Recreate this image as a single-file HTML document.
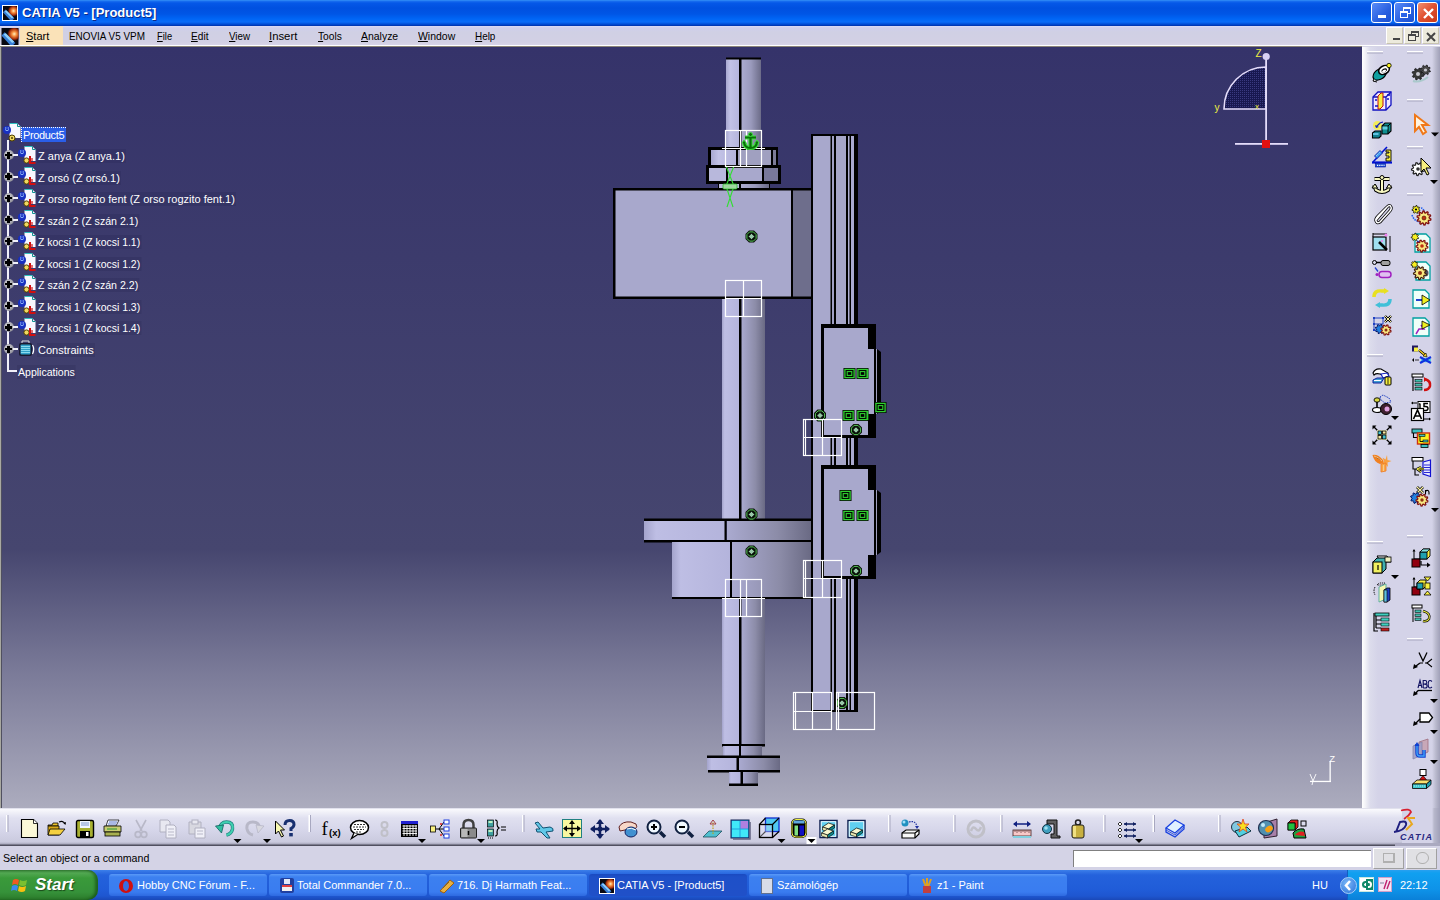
<!DOCTYPE html>
<html><head><meta charset="utf-8">
<style>
*{margin:0;padding:0;box-sizing:border-box}
html,body{width:1440px;height:900px;overflow:hidden;background:#d6d5e6;font-family:"Liberation Sans",sans-serif;position:relative}
.abs{position:absolute}
#title{left:0;top:0;width:1440px;height:26px;background:linear-gradient(#3a98f8 0,#1a70f0 1px,#0558e8 3px,#0050e0 8px,#0056e6 14px,#0066f6 19px,#0a6cf8 22px,#0048d0 24.5px,#0030a8 26px)}
#title .t{left:22px;top:5px;color:#fff;font-weight:bold;font-size:13px;line-height:16px;text-shadow:1px 1px 0 #0a2a8a}
#menu{left:0;top:26px;width:1440px;height:20px;background:linear-gradient(#dcdcf6 0,#cfcfec 2px,#d0d0e4 6px,#d2d0e4 16px,#d8d4e8 19px);border-bottom:1px solid #fff}
#menu span{position:absolute;top:3px;font-size:11px;line-height:14px;color:#000;transform-origin:0 0;white-space:nowrap}
#vp{left:2px;top:47px;width:1360px;height:761px;background:linear-gradient(#35336a 0%,#46466f 66%,#7a7a98 82%,#acacbe 100%)}
#vpl{left:0;top:46px;width:2px;height:762px;background:linear-gradient(90deg,#a8a8a0 0,#a8a8a0 1px,#505060 1px)}
#rtb{left:1362px;top:47px;width:78px;height:798px;background:linear-gradient(90deg,#fff 0,#f4f4f8 3px,#dcdcec 8px,#d4d3e8 16px,#d4d3e8 70px,#b8b8cc 74px,#a0a0b8 78px)}
#btb{left:0;top:808px;width:1440px;height:38px;background:linear-gradient(#c8c8dc 0,#fafafe 1px,#f4f4fa 3px,#e0e0f0 10px,#d6d6ea 22px,#cacade 34px,#a8a8bc 36px,#505060 37px,#505060 38px)}
#status{left:0;top:846px;width:1440px;height:24px;background:#d4d3e6}
#status .t{left:3px;top:5px;font-size:11px;line-height:14px;color:#000;transform:scaleX(0.965);transform-origin:0 0;white-space:nowrap}
#task{left:0;top:870px;width:1440px;height:30px;background:linear-gradient(#3c80ea 0,#3272e4 2px,#2462dc 5px,#205cd8 20px,#1e56d0 26px,#1a48b8 30px)}

.xb{width:21px;height:21px;border:1px solid #fff;border-radius:3px;background:linear-gradient(135deg,#5a8cf8,#2a60e0 60%,#1a50d0)}
.xc{background:linear-gradient(135deg,#f09070,#e05030 50%,#c83818)}
.mb{top:1px;width:17px;height:17px;background:#eceadc;border:1px solid #fff;border-right-color:#c8c4b0;border-bottom-color:#c8c4b0}
.sbtn{top:2px;width:31px;height:21px;background:#e0e0e4;border:1px solid #fff;border-right-color:#a0a0a0;border-bottom-color:#a0a0a0}
#startbtn{left:0;top:0;width:98px;height:30px;background:linear-gradient(#3c8a3c 0,#52a852 3px,#3a9a3a 8px,#36923a 22px,#2a7a2a 30px);border-radius:0 10px 10px 0;box-shadow:inset -3px 0 3px rgba(0,40,0,0.45)}
.tb{top:4px;width:158px;height:22px;border-radius:3px;background:linear-gradient(#5a9af8 0,#3c80f0 3px,#3a7cf0 18px,#2e6ae0 22px);color:#fff;font-size:11px}
.tb span{position:absolute;left:28px;top:5px;white-space:nowrap}
.tb.act{background:linear-gradient(#1a4ac0 0,#1e50c8 3px,#2050c8 20px);}
#tray{left:1347px;top:0;width:93px;height:30px;background:linear-gradient(#28a0f0 0,#10a0f0 3px,#0e92e8 20px,#0a80d8 30px);border-left:1px solid #1060c0}

.tr{font-size:11px;color:#fff;white-space:nowrap;line-height:14px;padding:0 1px;background:rgba(20,20,60,0.12)}
.tr.sel{background:#2a5ee8;padding:0 2px 0 1px;left:21px;top:127px !important;border-top:1px dotted #fff;border-left:1px dotted #fff;letter-spacing:-0.35px}
.pl{left:3.5px;width:10px;height:10px;border-radius:50%;background:radial-gradient(circle at 40% 40%,#d8d8dc 0%,#a8a8b0 50%,#6a6a78 100%)}
.pl::before{content:"";position:absolute;left:1.5px;top:3.8px;width:7px;height:2.4px;background:#000}
.pl::after{content:"";position:absolute;left:3.8px;top:1.5px;width:2.4px;height:7px;background:#000}
</style></head><body>
<div id="vpl" class="abs"></div>
<div id="vp" class="abs"></div><div class="abs" style="left:0;top:46px;width:1362px;height:1px;background:#8a8478"></div>
<svg class="abs" style="left:0;top:0" width="1440" height="900" viewBox="0 0 1440 900">
<defs>
<linearGradient id="rodL" x1="0" x2="1" y1="0" y2="0"><stop offset="0" stop-color="#a8a8d0"/><stop offset="0.3" stop-color="#c2c2e6"/><stop offset="1" stop-color="#b4b4dc"/></linearGradient>
<linearGradient id="rodR" x1="0" x2="1" y1="0" y2="0"><stop offset="0" stop-color="#acacd0"/><stop offset="0.5" stop-color="#9a9abc"/><stop offset="1" stop-color="#6c6c88"/></linearGradient>
<linearGradient id="cylL" x1="0" x2="1"><stop offset="0" stop-color="#a4a4cc"/><stop offset="0.15" stop-color="#bebee4"/><stop offset="1" stop-color="#b4b4dc"/></linearGradient>
<linearGradient id="cylR" x1="0" x2="1"><stop offset="0" stop-color="#aaaad0"/><stop offset="0.6" stop-color="#8c8ca8"/><stop offset="1" stop-color="#6a6a84"/></linearGradient>
<linearGradient id="side" x1="0" x2="1"><stop offset="0" stop-color="#7a7a98"/><stop offset="1" stop-color="#6a6a88"/></linearGradient>
</defs>
<g id="model">
<!-- upper rod -->
<rect x="726" y="59" width="14" height="90" fill="url(#rodL)"/>
<rect x="741" y="59" width="20" height="90" fill="url(#rodR)"/>
<rect x="726" y="57.5" width="35" height="2" fill="#000"/>
<rect x="739" y="58" width="2.5" height="91" fill="#000"/>
<!-- upper nut -->
<rect x="708" y="147" width="70" height="20" fill="#000"/>
<rect x="711" y="150" width="25" height="15" fill="url(#rodL)"/>
<rect x="738" y="150" width="33" height="15" fill="#a0a0c0"/>
<rect x="773" y="150" width="3" height="15" fill="#7c7c98"/>
<!-- lower nut -->
<rect x="706" y="165" width="75" height="19" fill="#000"/>
<rect x="709" y="168" width="17" height="13" fill="#b8b8dc"/>
<rect x="728" y="168" width="34" height="13" fill="#a8a8cc"/>
<rect x="764" y="168" width="14" height="13" fill="#78789a"/>
<!-- washer -->
<rect x="718" y="183" width="52" height="6" fill="#000"/><rect x="719" y="184" width="20" height="4" fill="#b8b8dc"/><rect x="741" y="184" width="28" height="4" fill="url(#rodR)"/>
<!-- big block -->
<rect x="613" y="188" width="200" height="111" fill="#000"/>
<rect x="615.5" y="190.5" width="175.5" height="106" fill="#a8a8cc"/>
<rect x="793" y="190.5" width="18.5" height="106" fill="#6e6e8c"/>
<!-- rod between block and plate -->
<rect x="722" y="299" width="18" height="220" fill="url(#cylL)"/>
<rect x="741" y="299" width="24" height="220" fill="url(#cylR)"/>
<rect x="739" y="299" width="2.5" height="220" fill="#000"/>
<!-- plate -->
<rect x="644" y="521" width="81" height="19" fill="url(#cylL)"/>
<rect x="727" y="521" width="84" height="19" fill="url(#cylR)"/>
<rect x="644" y="518.5" width="168" height="2.5" fill="#000"/>
<rect x="644" y="540" width="168" height="2.5" fill="#000"/>
<rect x="724.5" y="520" width="2" height="21" fill="#000"/>
<!-- lower cylinder -->
<rect x="672" y="542" width="58" height="55" fill="url(#cylL)"/>
<rect x="732" y="542" width="79" height="55" fill="url(#cylR)"/>
<rect x="730" y="541" width="2" height="57" fill="#000"/>
<rect x="672" y="597" width="140" height="2" fill="#000"/>
<!-- rod lower -->
<rect x="722" y="598" width="18" height="147" fill="url(#cylL)"/>
<rect x="741" y="598" width="24" height="147" fill="url(#cylR)"/>
<rect x="739" y="598" width="2.5" height="158" fill="#000"/>
<rect x="722" y="744" width="43" height="2.5" fill="#000"/>
<!-- neck -->
<rect x="723" y="746" width="16" height="10" fill="url(#cylL)"/>
<rect x="741" y="746" width="21" height="10" fill="url(#cylR)"/>
<!-- flange -->
<rect x="707" y="755.5" width="73" height="2.5" fill="#000"/>
<rect x="707" y="758" width="30" height="12" fill="url(#cylL)"/>
<rect x="739" y="758" width="41" height="12" fill="url(#cylR)"/>
<rect x="736.5" y="757" width="2.5" height="14" fill="#000"/>
<rect x="708" y="770" width="72" height="2.5" fill="#000"/>
<!-- tip -->
<rect x="729" y="772" width="12" height="12" fill="url(#cylL)"/>
<rect x="742" y="772" width="16" height="12" fill="url(#cylR)"/>
<rect x="740.5" y="771" width="2.5" height="14" fill="#000"/>
<rect x="729" y="783.5" width="29" height="2.5" fill="#000"/>
<!-- rail -->
<rect x="811" y="134" width="47" height="578" fill="#000"/>
<rect x="813" y="136" width="17.5" height="574" fill="#a8a8cc"/>
<rect x="832" y="136" width="2" height="574" fill="#a0a0c4"/>
<rect x="836" y="136" width="10" height="574" fill="#a6a6c8"/>
<rect x="848" y="136" width="1.5" height="574" fill="#b0b0d4"/>
<rect x="851" y="136" width="3" height="574" fill="#aaaad0"/>
<!-- carriage 1 -->
<rect x="821" y="324" width="55" height="114" fill="#000"/>
<path d="M824 328 H868 V349 H874 V414 H868 V435 H824 Z" fill="#a8a8cc"/>
<rect x="876" y="349" width="1" height="65" fill="#a0a0c0"/>
<path d="M877 349 L881 352 V411 L877 414 Z" fill="#000"/>
<!-- carriage 2 -->
<rect x="821" y="465" width="55" height="114" fill="#000"/>
<path d="M824 469 H868 V490 H874 V555 H868 V576 H824 Z" fill="#a8a8cc"/>
<rect x="876" y="490" width="1" height="65" fill="#a0a0c0"/>
<path d="M877 490 L881 493 V552 L877 555 Z" fill="#000"/>
<!-- markers -->
<g transform="translate(751.5,236.5)"><path d="M-2.49 -6H2.49L6 -2.49V2.49L2.49 6H-2.49L-6 2.49V-2.49Z" fill="#081008"/><path d="M-1.91 -4.6H1.91L4.6 -1.91V1.91L1.91 4.6H-1.91L-4.6 1.91V-1.91Z" fill="none" stroke="#58c858" stroke-width="1"/><path d="M0 -3.1L3.1 0L0 3.1L-3.1 0Z" fill="#98c8a8" stroke="#081008" stroke-width="0.6"/></g>
<g transform="translate(820,415.5)"><path d="M-2.49 -6H2.49L6 -2.49V2.49L2.49 6H-2.49L-6 2.49V-2.49Z" fill="#081008"/><path d="M-1.91 -4.6H1.91L4.6 -1.91V1.91L1.91 4.6H-1.91L-4.6 1.91V-1.91Z" fill="none" stroke="#58c858" stroke-width="1"/><path d="M0 -3.1L3.1 0L0 3.1L-3.1 0Z" fill="#98c8a8" stroke="#081008" stroke-width="0.6"/></g>
<g transform="translate(856,430)"><path d="M-2.49 -6H2.49L6 -2.49V2.49L2.49 6H-2.49L-6 2.49V-2.49Z" fill="#081008"/><path d="M-1.91 -4.6H1.91L4.6 -1.91V1.91L1.91 4.6H-1.91L-4.6 1.91V-1.91Z" fill="none" stroke="#58c858" stroke-width="1"/><path d="M0 -3.1L3.1 0L0 3.1L-3.1 0Z" fill="#98c8a8" stroke="#081008" stroke-width="0.6"/></g>
<g transform="translate(751.5,514.5)"><path d="M-2.49 -6H2.49L6 -2.49V2.49L2.49 6H-2.49L-6 2.49V-2.49Z" fill="#081008"/><path d="M-1.91 -4.6H1.91L4.6 -1.91V1.91L1.91 4.6H-1.91L-4.6 1.91V-1.91Z" fill="none" stroke="#58c858" stroke-width="1"/><path d="M0 -3.1L3.1 0L0 3.1L-3.1 0Z" fill="#98c8a8" stroke="#081008" stroke-width="0.6"/></g>
<g transform="translate(751.5,551.5)"><path d="M-2.49 -6H2.49L6 -2.49V2.49L2.49 6H-2.49L-6 2.49V-2.49Z" fill="#081008"/><path d="M-1.91 -4.6H1.91L4.6 -1.91V1.91L1.91 4.6H-1.91L-4.6 1.91V-1.91Z" fill="none" stroke="#58c858" stroke-width="1"/><path d="M0 -3.1L3.1 0L0 3.1L-3.1 0Z" fill="#98c8a8" stroke="#081008" stroke-width="0.6"/></g>
<g transform="translate(856,571)"><path d="M-2.49 -6H2.49L6 -2.49V2.49L2.49 6H-2.49L-6 2.49V-2.49Z" fill="#081008"/><path d="M-1.91 -4.6H1.91L4.6 -1.91V1.91L1.91 4.6H-1.91L-4.6 1.91V-1.91Z" fill="none" stroke="#58c858" stroke-width="1"/><path d="M0 -3.1L3.1 0L0 3.1L-3.1 0Z" fill="#98c8a8" stroke="#081008" stroke-width="0.6"/></g>
<g transform="translate(842,703)"><path d="M-2.49 -6H2.49L6 -2.49V2.49L2.49 6H-2.49L-6 2.49V-2.49Z" fill="#081008"/><path d="M-1.91 -4.6H1.91L4.6 -1.91V1.91L1.91 4.6H-1.91L-4.6 1.91V-1.91Z" fill="none" stroke="#58c858" stroke-width="1"/><path d="M0 -3.1L3.1 0L0 3.1L-3.1 0Z" fill="#98c8a8" stroke="#081008" stroke-width="0.6"/></g>
<g transform="translate(849.5,373.5)"><rect x="-6" y="-5.5" width="12" height="11" fill="#000"/><rect x="-4.6" y="-4.1" width="9.2" height="8.2" fill="none" stroke="#30d030" stroke-width="1.3"/><rect x="-2.3" y="-1.9" width="4.6" height="3.8" fill="none" stroke="#30d030" stroke-width="1.1"/><rect x="-0.7" y="-0.7" width="1.4" height="1.4" fill="#000"/></g>
<g transform="translate(862.5,373.5)"><rect x="-6" y="-5.5" width="12" height="11" fill="#000"/><rect x="-4.6" y="-4.1" width="9.2" height="8.2" fill="none" stroke="#30d030" stroke-width="1.3"/><rect x="-2.3" y="-1.9" width="4.6" height="3.8" fill="none" stroke="#30d030" stroke-width="1.1"/><rect x="-0.7" y="-0.7" width="1.4" height="1.4" fill="#000"/><rect x="4.6" y="-4.5" width="1.2" height="9" fill="#30d030"/></g>
<g transform="translate(848.5,415.5)"><rect x="-6" y="-5.5" width="12" height="11" fill="#000"/><rect x="-4.6" y="-4.1" width="9.2" height="8.2" fill="none" stroke="#30d030" stroke-width="1.3"/><rect x="-2.3" y="-1.9" width="4.6" height="3.8" fill="none" stroke="#30d030" stroke-width="1.1"/><rect x="-0.7" y="-0.7" width="1.4" height="1.4" fill="#000"/></g>
<g transform="translate(862.5,415.5)"><rect x="-6" y="-5.5" width="12" height="11" fill="#000"/><rect x="-4.6" y="-4.1" width="9.2" height="8.2" fill="none" stroke="#30d030" stroke-width="1.3"/><rect x="-2.3" y="-1.9" width="4.6" height="3.8" fill="none" stroke="#30d030" stroke-width="1.1"/><rect x="-0.7" y="-0.7" width="1.4" height="1.4" fill="#000"/><rect x="4.6" y="-4.5" width="1.2" height="9" fill="#30d030"/></g>
<g transform="translate(880.5,407.5)"><rect x="-6" y="-5.5" width="12" height="11" fill="#000"/><rect x="-4.6" y="-4.1" width="9.2" height="8.2" fill="none" stroke="#30d030" stroke-width="1.3"/><rect x="-2.3" y="-1.9" width="4.6" height="3.8" fill="none" stroke="#30d030" stroke-width="1.1"/><rect x="-0.7" y="-0.7" width="1.4" height="1.4" fill="#000"/></g>
<g transform="translate(845.5,495.5)"><rect x="-6" y="-5.5" width="12" height="11" fill="#000"/><rect x="-4.6" y="-4.1" width="9.2" height="8.2" fill="none" stroke="#30d030" stroke-width="1.3"/><rect x="-2.3" y="-1.9" width="4.6" height="3.8" fill="none" stroke="#30d030" stroke-width="1.1"/><rect x="-0.7" y="-0.7" width="1.4" height="1.4" fill="#000"/></g>
<g transform="translate(848.5,515.5)"><rect x="-6" y="-5.5" width="12" height="11" fill="#000"/><rect x="-4.6" y="-4.1" width="9.2" height="8.2" fill="none" stroke="#30d030" stroke-width="1.3"/><rect x="-2.3" y="-1.9" width="4.6" height="3.8" fill="none" stroke="#30d030" stroke-width="1.1"/><rect x="-0.7" y="-0.7" width="1.4" height="1.4" fill="#000"/></g>
<g transform="translate(862.5,515.5)"><rect x="-6" y="-5.5" width="12" height="11" fill="#000"/><rect x="-4.6" y="-4.1" width="9.2" height="8.2" fill="none" stroke="#30d030" stroke-width="1.3"/><rect x="-2.3" y="-1.9" width="4.6" height="3.8" fill="none" stroke="#30d030" stroke-width="1.1"/><rect x="-0.7" y="-0.7" width="1.4" height="1.4" fill="#000"/><rect x="4.6" y="-4.5" width="1.2" height="9" fill="#30d030"/></g>

<g stroke="#30e030" stroke-width="1.1" fill="none"><path d="M726 166L734 186L727 207M734 166L726 186L733 207"/></g><rect x="723" y="184" width="14" height="5" rx="1" fill="#a0d8a0" stroke="#30c030" stroke-width="0.8"/>
<!-- white grids -->
<g fill="none" stroke="#fff" stroke-width="1.2">
<rect x="725.5" y="130.5" width="36" height="36"/><path d="M740.5 130.5V166.5 M746.5 130.5V166.5 M722 148.5H765"/>
<rect x="725.5" y="280.5" width="36" height="36"/><path d="M743.5 280.5V316.5 M725.5 298.5H761.5"/>
<rect x="803.5" y="419.5" width="38" height="36"/><path d="M805.5 419.5V455.5 M822.5 419.5V455.5 M803.5 437.5H841.5"/>
<rect x="803.5" y="560.5" width="38" height="37"/><path d="M805.5 560.5V597.5 M822.5 560.5V597.5 M803.5 578.5H841.5"/>
<rect x="725.5" y="579.5" width="36" height="37"/><path d="M740.5 579.5V616.5 M746.5 579.5V616.5 M722 598.5H765"/>
<rect x="793.5" y="692.5" width="38" height="37"/><path d="M795.5 692.5V729.5 M812.5 692.5V729.5 M793.5 711.5H831.5"/>
<rect x="836.5" y="692.5" width="38" height="37"/><path d="M838.5 692.5V729.5"/>
</g>
</g>
<g transform="translate(750.5,141)"><path d="M0 -6V7M-5.5 -3.5H5.5M-6.5 1Q-6 7 0 7Q6 7 6.5 1" stroke="#40e040" stroke-width="4.2" fill="none"/><path d="M-8.5 2L-6.5 -1L-4 2.5Z M8.5 2L6.5 -1L4 2.5Z" fill="#0a600a" stroke="#40e040" stroke-width="1"/><path d="M0 -6V7M-5.5 -3.5H5.5M-6.5 1Q-6 7 0 7Q6 7 6.5 1" stroke="#0a700a" stroke-width="2.2" fill="none"/><circle cy="-6.5" r="2" fill="#0a700a" stroke="#40e040" stroke-width="1"/></g>
<!-- compass -->
<g>
<defs><pattern id="hatch" width="2" height="2" patternUnits="userSpaceOnUse"><rect width="2" height="2" fill="#181850"/><rect width="1" height="1" fill="#3a3a80"/></pattern></defs><path d="M1266 109 H1224 A42 42 0 0 1 1266 67 Z" fill="url(#hatch)" stroke="#e4dcfa" stroke-width="1.6"/>
<rect x="1265.2" y="57" width="1.8" height="84" fill="#e4dcfa"/>
<circle cx="1266.2" cy="56.5" r="3.6" fill="#d8d0f4"/>
<rect x="1235" y="143" width="53" height="1.8" fill="#e4dcfa"/>
<rect x="1262" y="140" width="8" height="8" fill="#e01010"/>
<text x="1255.5" y="57" font-family="Liberation Sans" font-size="10" fill="#f0f040">Z</text>
<text x="1214.5" y="111" font-family="Liberation Sans" font-size="10" fill="#f0f040">y</text>
<text x="1255" y="109" font-family="Liberation Sans" font-size="8" fill="#f0f040">x</text>
</g>
<g>
<rect x="1329.5" y="761" width="1.3" height="21" fill="#fff"/>
<rect x="1310" y="780.8" width="21" height="1.3" fill="#fff"/>
<text x="1329.5" y="762" font-family="Liberation Sans" font-size="9" fill="#fff">Z</text>
<path d="M1310 774L1313 781L1316 774M1313 781L1312 785" stroke="#fff" stroke-width="0.9" fill="none"/>
</g>
</svg>

<div id="tree" class="abs" style="left:0;top:0">
<div class="abs" style="left:7px;top:140px;width:2px;height:232px;background:#f0f0f8"></div>
<div class="abs" style="left:7px;top:370px;width:10px;height:2px;background:#f0f0f8"></div>
<svg class="abs" style="left:2px;top:123px" width="20" height="20" viewBox="0 0 20 20"><path d="M7.5 0.5H15.5L18.5 3.5V15H7.5Z" fill="#f8f8ff"/><path d="M15.5 0.5V3.5H18.5" fill="none" stroke="#109090" stroke-width="1"/><path d="M7.5 0.5H15" stroke="#30c0c0" stroke-width="1"/><circle cx="5" cy="7" r="4" fill="#1830c0"/><path d="M3 6.5Q5 9 7 6.5" stroke="#a0c8ff" stroke-width="0.9" fill="none"/><circle cx="3.8" cy="5" r="0.7" fill="#a0c8ff"/><circle cx="6.2" cy="5" r="0.7" fill="#a0c8ff"/><circle cx="10" cy="15" r="3" fill="#f0d860" stroke="#504000" stroke-width="1"/><circle cx="10" cy="15" r="1" fill="#504000"/></svg>
<div class="abs tr sel" style="left:21px;top:127px">Product5</div>
<div class="abs pl" style="top:150.0px"></div>
<div class="abs" style="left:13px;top:154.0px;width:5px;height:2px;background:#f0f0f8"></div>
<svg class="abs" style="left:17px;top:145.5px" width="20" height="19" viewBox="0 0 20 19"><path d="M7.5 0.5H15.5L18.5 3.5V15H7.5Z" fill="#f8f8ff"/><path d="M15.5 0.5V3.5H18.5" fill="none" stroke="#109090" stroke-width="1"/><path d="M7.5 0.5H15" stroke="#30c0c0" stroke-width="1"/><circle cx="5" cy="7" r="4" fill="#1830c0"/><path d="M3 6.5Q5 9 7 6.5" stroke="#a0c8ff" stroke-width="0.9" fill="none"/><circle cx="3.8" cy="5" r="0.7" fill="#a0c8ff"/><circle cx="6.2" cy="5" r="0.7" fill="#a0c8ff"/><circle cx="9.5" cy="14.5" r="2.6" fill="#f0d860" stroke="#504000" stroke-width="1"/><path d="M13 10V17H18.5" stroke="#d01010" stroke-width="2" fill="none"/><path d="M15 12V15" stroke="#d01010" stroke-width="1.2"/></svg>
<div class="abs tr" style="left:37px;top:149.0px">Z anya (Z anya.1)</div>
<div class="abs pl" style="top:171.6px"></div>
<div class="abs" style="left:13px;top:175.6px;width:5px;height:2px;background:#f0f0f8"></div>
<svg class="abs" style="left:17px;top:167.1px" width="20" height="19" viewBox="0 0 20 19"><path d="M7.5 0.5H15.5L18.5 3.5V15H7.5Z" fill="#f8f8ff"/><path d="M15.5 0.5V3.5H18.5" fill="none" stroke="#109090" stroke-width="1"/><path d="M7.5 0.5H15" stroke="#30c0c0" stroke-width="1"/><circle cx="5" cy="7" r="4" fill="#1830c0"/><path d="M3 6.5Q5 9 7 6.5" stroke="#a0c8ff" stroke-width="0.9" fill="none"/><circle cx="3.8" cy="5" r="0.7" fill="#a0c8ff"/><circle cx="6.2" cy="5" r="0.7" fill="#a0c8ff"/><circle cx="9.5" cy="14.5" r="2.6" fill="#f0d860" stroke="#504000" stroke-width="1"/><path d="M13 10V17H18.5" stroke="#d01010" stroke-width="2" fill="none"/><path d="M15 12V15" stroke="#d01010" stroke-width="1.2"/></svg>
<div class="abs tr" style="left:37px;top:170.6px">Z orsó (Z orsó.1)</div>
<div class="abs pl" style="top:193.1px"></div>
<div class="abs" style="left:13px;top:197.1px;width:5px;height:2px;background:#f0f0f8"></div>
<svg class="abs" style="left:17px;top:188.6px" width="20" height="19" viewBox="0 0 20 19"><path d="M7.5 0.5H15.5L18.5 3.5V15H7.5Z" fill="#f8f8ff"/><path d="M15.5 0.5V3.5H18.5" fill="none" stroke="#109090" stroke-width="1"/><path d="M7.5 0.5H15" stroke="#30c0c0" stroke-width="1"/><circle cx="5" cy="7" r="4" fill="#1830c0"/><path d="M3 6.5Q5 9 7 6.5" stroke="#a0c8ff" stroke-width="0.9" fill="none"/><circle cx="3.8" cy="5" r="0.7" fill="#a0c8ff"/><circle cx="6.2" cy="5" r="0.7" fill="#a0c8ff"/><circle cx="9.5" cy="14.5" r="2.6" fill="#f0d860" stroke="#504000" stroke-width="1"/><path d="M13 10V17H18.5" stroke="#d01010" stroke-width="2" fill="none"/><path d="M15 12V15" stroke="#d01010" stroke-width="1.2"/></svg>
<div class="abs tr" style="left:37px;top:192.1px">Z orso rogzito fent (Z orso rogzito fent.1)</div>
<div class="abs pl" style="top:214.7px"></div>
<div class="abs" style="left:13px;top:218.7px;width:5px;height:2px;background:#f0f0f8"></div>
<svg class="abs" style="left:17px;top:210.2px" width="20" height="19" viewBox="0 0 20 19"><path d="M7.5 0.5H15.5L18.5 3.5V15H7.5Z" fill="#f8f8ff"/><path d="M15.5 0.5V3.5H18.5" fill="none" stroke="#109090" stroke-width="1"/><path d="M7.5 0.5H15" stroke="#30c0c0" stroke-width="1"/><circle cx="5" cy="7" r="4" fill="#1830c0"/><path d="M3 6.5Q5 9 7 6.5" stroke="#a0c8ff" stroke-width="0.9" fill="none"/><circle cx="3.8" cy="5" r="0.7" fill="#a0c8ff"/><circle cx="6.2" cy="5" r="0.7" fill="#a0c8ff"/><circle cx="9.5" cy="14.5" r="2.6" fill="#f0d860" stroke="#504000" stroke-width="1"/><path d="M13 10V17H18.5" stroke="#d01010" stroke-width="2" fill="none"/><path d="M15 12V15" stroke="#d01010" stroke-width="1.2"/></svg>
<div class="abs tr" style="left:37px;top:213.7px;transform:scaleX(0.965);transform-origin:0 0">Z szán 2 (Z szán 2.1)</div>
<div class="abs pl" style="top:236.2px"></div>
<div class="abs" style="left:13px;top:240.2px;width:5px;height:2px;background:#f0f0f8"></div>
<svg class="abs" style="left:17px;top:231.7px" width="20" height="19" viewBox="0 0 20 19"><path d="M7.5 0.5H15.5L18.5 3.5V15H7.5Z" fill="#f8f8ff"/><path d="M15.5 0.5V3.5H18.5" fill="none" stroke="#109090" stroke-width="1"/><path d="M7.5 0.5H15" stroke="#30c0c0" stroke-width="1"/><circle cx="5" cy="7" r="4" fill="#1830c0"/><path d="M3 6.5Q5 9 7 6.5" stroke="#a0c8ff" stroke-width="0.9" fill="none"/><circle cx="3.8" cy="5" r="0.7" fill="#a0c8ff"/><circle cx="6.2" cy="5" r="0.7" fill="#a0c8ff"/><circle cx="9.5" cy="14.5" r="2.6" fill="#f0d860" stroke="#504000" stroke-width="1"/><path d="M13 10V17H18.5" stroke="#d01010" stroke-width="2" fill="none"/><path d="M15 12V15" stroke="#d01010" stroke-width="1.2"/></svg>
<div class="abs tr" style="left:37px;top:235.2px;transform:scaleX(0.95);transform-origin:0 0">Z kocsi 1 (Z kocsi 1.1)</div>
<div class="abs pl" style="top:257.7px"></div>
<div class="abs" style="left:13px;top:261.8px;width:5px;height:2px;background:#f0f0f8"></div>
<svg class="abs" style="left:17px;top:253.2px" width="20" height="19" viewBox="0 0 20 19"><path d="M7.5 0.5H15.5L18.5 3.5V15H7.5Z" fill="#f8f8ff"/><path d="M15.5 0.5V3.5H18.5" fill="none" stroke="#109090" stroke-width="1"/><path d="M7.5 0.5H15" stroke="#30c0c0" stroke-width="1"/><circle cx="5" cy="7" r="4" fill="#1830c0"/><path d="M3 6.5Q5 9 7 6.5" stroke="#a0c8ff" stroke-width="0.9" fill="none"/><circle cx="3.8" cy="5" r="0.7" fill="#a0c8ff"/><circle cx="6.2" cy="5" r="0.7" fill="#a0c8ff"/><circle cx="9.5" cy="14.5" r="2.6" fill="#f0d860" stroke="#504000" stroke-width="1"/><path d="M13 10V17H18.5" stroke="#d01010" stroke-width="2" fill="none"/><path d="M15 12V15" stroke="#d01010" stroke-width="1.2"/></svg>
<div class="abs tr" style="left:37px;top:256.8px;transform:scaleX(0.95);transform-origin:0 0">Z kocsi 1 (Z kocsi 1.2)</div>
<div class="abs pl" style="top:279.3px"></div>
<div class="abs" style="left:13px;top:283.3px;width:5px;height:2px;background:#f0f0f8"></div>
<svg class="abs" style="left:17px;top:274.8px" width="20" height="19" viewBox="0 0 20 19"><path d="M7.5 0.5H15.5L18.5 3.5V15H7.5Z" fill="#f8f8ff"/><path d="M15.5 0.5V3.5H18.5" fill="none" stroke="#109090" stroke-width="1"/><path d="M7.5 0.5H15" stroke="#30c0c0" stroke-width="1"/><circle cx="5" cy="7" r="4" fill="#1830c0"/><path d="M3 6.5Q5 9 7 6.5" stroke="#a0c8ff" stroke-width="0.9" fill="none"/><circle cx="3.8" cy="5" r="0.7" fill="#a0c8ff"/><circle cx="6.2" cy="5" r="0.7" fill="#a0c8ff"/><circle cx="9.5" cy="14.5" r="2.6" fill="#f0d860" stroke="#504000" stroke-width="1"/><path d="M13 10V17H18.5" stroke="#d01010" stroke-width="2" fill="none"/><path d="M15 12V15" stroke="#d01010" stroke-width="1.2"/></svg>
<div class="abs tr" style="left:37px;top:278.3px;transform:scaleX(0.965);transform-origin:0 0">Z szán 2 (Z szán 2.2)</div>
<div class="abs pl" style="top:300.9px"></div>
<div class="abs" style="left:13px;top:304.9px;width:5px;height:2px;background:#f0f0f8"></div>
<svg class="abs" style="left:17px;top:296.4px" width="20" height="19" viewBox="0 0 20 19"><path d="M7.5 0.5H15.5L18.5 3.5V15H7.5Z" fill="#f8f8ff"/><path d="M15.5 0.5V3.5H18.5" fill="none" stroke="#109090" stroke-width="1"/><path d="M7.5 0.5H15" stroke="#30c0c0" stroke-width="1"/><circle cx="5" cy="7" r="4" fill="#1830c0"/><path d="M3 6.5Q5 9 7 6.5" stroke="#a0c8ff" stroke-width="0.9" fill="none"/><circle cx="3.8" cy="5" r="0.7" fill="#a0c8ff"/><circle cx="6.2" cy="5" r="0.7" fill="#a0c8ff"/><circle cx="9.5" cy="14.5" r="2.6" fill="#f0d860" stroke="#504000" stroke-width="1"/><path d="M13 10V17H18.5" stroke="#d01010" stroke-width="2" fill="none"/><path d="M15 12V15" stroke="#d01010" stroke-width="1.2"/></svg>
<div class="abs tr" style="left:37px;top:299.9px;transform:scaleX(0.95);transform-origin:0 0">Z kocsi 1 (Z kocsi 1.3)</div>
<div class="abs pl" style="top:322.4px"></div>
<div class="abs" style="left:13px;top:326.4px;width:5px;height:2px;background:#f0f0f8"></div>
<svg class="abs" style="left:17px;top:317.9px" width="20" height="19" viewBox="0 0 20 19"><path d="M7.5 0.5H15.5L18.5 3.5V15H7.5Z" fill="#f8f8ff"/><path d="M15.5 0.5V3.5H18.5" fill="none" stroke="#109090" stroke-width="1"/><path d="M7.5 0.5H15" stroke="#30c0c0" stroke-width="1"/><circle cx="5" cy="7" r="4" fill="#1830c0"/><path d="M3 6.5Q5 9 7 6.5" stroke="#a0c8ff" stroke-width="0.9" fill="none"/><circle cx="3.8" cy="5" r="0.7" fill="#a0c8ff"/><circle cx="6.2" cy="5" r="0.7" fill="#a0c8ff"/><circle cx="9.5" cy="14.5" r="2.6" fill="#f0d860" stroke="#504000" stroke-width="1"/><path d="M13 10V17H18.5" stroke="#d01010" stroke-width="2" fill="none"/><path d="M15 12V15" stroke="#d01010" stroke-width="1.2"/></svg>
<div class="abs tr" style="left:37px;top:321.4px;transform:scaleX(0.95);transform-origin:0 0">Z kocsi 1 (Z kocsi 1.4)</div>
<div class="abs pl" style="top:344.0px"></div>
<div class="abs" style="left:13px;top:348.0px;width:5px;height:2px;background:#f0f0f8"></div>
<svg class="abs" style="left:18px;top:339.5px" width="18" height="18"><rect x="1" y="3" width="13" height="13" rx="2" fill="#1a1a30"/><rect x="2.5" y="4.5" width="10" height="10" rx="1" fill="#30a0c8"/><path d="M3 6.5H12M3 8.5H12M3 10.5H12M3 12.5H12" stroke="#a0e8f8" stroke-width="0.8"/><path d="M14.5 5Q17 9 14.5 14" stroke="#fff" fill="none" stroke-width="1.2"/><path d="M4 3V1H11V3" stroke="#e0e0e0" fill="none"/></svg>
<div class="abs tr" style="left:37px;top:343.0px">Constraints</div>
<div class="abs tr" style="left:17px;top:364.5px;transform:scaleX(0.96);transform-origin:0 0">Applications</div>
</div>
<div id="rtb" class="abs"></div>
<div id="btb" class="abs"></div>
<div class="abs" style="left:1402px;top:808px;width:38px;height:37px;background:linear-gradient(90deg,#d4d3e8 0,#d4d3e8 30px,#b8b8cc 32px,#a0a0b8 38px)"></div><div class="abs" style="left:1395px;top:843px;width:45px;height:3px;background:#aaa9c0"></div>
<div id="title" class="abs">
<div class="abs" style="left:2px;top:5px;width:16px;height:16px;background:#fff;padding:1px"><svg width="14" height="14" viewBox="0 0 16 16" style="display:block"><rect width="16" height="16" fill="#080810"/><radialGradient id="glw14" cx="0.75" cy="0.35" r="0.45"><stop offset="0" stop-color="#fff0c0"/><stop offset="0.3" stop-color="#f89040"/><stop offset="0.7" stop-color="#a02808"/><stop offset="1" stop-color="#080810" stop-opacity="0"/></radialGradient><rect width="16" height="16" fill="url(#glw14)"/><path d="M0 7L3 4L13 14L11 16H8Z" fill="#3a80d8"/><path d="M2 6L4 5L12 13L10 14Z" fill="#90d0f8"/></svg></div>
<div class="t abs">CATIA V5 - [Product5]</div>
<div class="abs xb" style="left:1371px;top:2px"><div class="abs" style="left:6px;top:12px;width:8px;height:3px;background:#fff"></div></div>
<div class="abs xb" style="left:1394px;top:2px"><div class="abs" style="left:8px;top:4px;width:8px;height:7px;border:1px solid #fff;border-top-width:2px"></div><div class="abs" style="left:5px;top:8px;width:8px;height:7px;border:1px solid #fff;border-top-width:2px;background:#2a64e8"></div></div>
<div class="abs xb xc" style="left:1417px;top:2px"><svg width="21" height="21" style="position:absolute;left:0;top:0"><path d="M6 6L15 15M15 6L6 15" stroke="#fff" stroke-width="2.4"/></svg></div>
</div>
<div id="menu" class="abs">
<div class="abs" style="left:1px;top:2px;width:18px;height:17px"><svg width="18" height="17" viewBox="0 0 16 16" style="display:block"><rect width="16" height="16" fill="#080810"/><radialGradient id="glw18" cx="0.75" cy="0.35" r="0.45"><stop offset="0" stop-color="#fff0c0"/><stop offset="0.3" stop-color="#f89040"/><stop offset="0.7" stop-color="#a02808"/><stop offset="1" stop-color="#080810" stop-opacity="0"/></radialGradient><rect width="16" height="16" fill="url(#glw18)"/><path d="M0 7L3 4L13 14L11 16H8Z" fill="#3a80d8"/><path d="M2 6L4 5L12 13L10 14Z" fill="#90d0f8"/></svg></div>
<div class="abs" style="left:20px;top:0;width:43px;height:19px;background:#fae2b8"></div>
<span style="left:26px"><u>S</u>tart</span>
<span style="left:68.5px;transform:scaleX(0.9)">ENOVIA V5 VPM</span>
<span style="left:157px;transform:scaleX(0.85)"><u>F</u>ile</span>
<span style="left:191px;transform:scaleX(0.92)"><u>E</u>dit</span>
<span style="left:229px;transform:scaleX(0.89)"><u>V</u>iew</span>
<span style="left:269px;transform:scaleX(1.03)"><u>I</u>nsert</span>
<span style="left:318px;transform:scaleX(0.93)"><u>T</u>ools</span>
<span style="left:361px;transform:scaleX(0.95)"><u>A</u>nalyze</span>
<span style="left:418px;transform:scaleX(0.95)"><u>W</u>indow</span>
<span style="left:475px;transform:scaleX(0.9)"><u>H</u>elp</span>
<div class="abs mb" style="left:1386px"><div class="abs" style="left:6px;top:10px;width:7px;height:2px;background:#444"></div></div>
<div class="abs mb" style="left:1404px"><div class="abs" style="left:6px;top:3px;width:8px;height:6px;border:1px solid #444;border-top-width:2px"></div><div class="abs" style="left:3px;top:6px;width:8px;height:7px;border:1px solid #444;border-top-width:2px;background:#eceadc"></div></div>
<div class="abs mb" style="left:1422px"><svg width="17" height="18" style="position:absolute;left:0;top:0"><path d="M4 5L12 13M12 5L4 13" stroke="#444" stroke-width="2"/></svg></div>
</div>
<div id="status" class="abs"><div class="t abs">Select an object or a command</div>
<div class="abs" style="left:1073px;top:4px;width:298px;height:17px;background:#fff;border-top:1px solid #808080;border-left:1px solid #808080"></div>
<div class="abs sbtn" style="left:1373px"><div class="abs" style="left:9px;top:4px;width:12px;height:10px;border:2px solid #b0b0b0;border-left-width:1px;border-top-width:1px"></div></div>
<div class="abs sbtn" style="left:1406px"><div class="abs" style="left:9px;top:3px;width:13px;height:12px;border:1px solid #b0b0b0;border-radius:6px"></div></div>
</div>
<div id="task" class="abs">
<div class="abs" id="startbtn"><div class="abs" style="left:11px;top:7px;width:18px;height:17px"><svg width="18" height="17"><path d="M2 3 Q5 1 8 3 L7 8 Q4 6 1 8Z" fill="#f05a20"/><path d="M9 3 Q12 5 16 3 L15 8 Q12 10 8 8Z" fill="#7ac030"/><path d="M1 9 Q4 7 7 9 L6 14 Q3 12 0 14Z" fill="#3a8af0"/><path d="M8 9 Q11 11 15 9 L14 14 Q11 16 7 14Z" fill="#f8c010"/></svg></div><div class="abs" style="left:35px;top:5px;color:#fff;font-style:italic;font-weight:bold;font-size:17px;line-height:20px;text-shadow:1px 1px 1px #1a4a1a">Start</div></div>
<div class="abs tb" style="left:109px"><div class="ic abs" style="left:10px;top:5px;width:14px;height:14px;border-radius:50%;background:#d01010;border:0"><div style="position:absolute;left:4px;top:2px;width:6px;height:10px;border-radius:50%;background:#3a6ee0"></div></div><span>Hobby CNC Fórum - F...</span></div>
<div class="abs tb" style="left:269px"><div class="abs" style="left:11px;top:4px;width:14px;height:15px;background:#2040a0;border-radius:2px"><div style="position:absolute;left:2px;top:7px;width:10px;height:6px;background:#f0f0f0;border-top:2px solid #e04040"></div><div style="position:absolute;left:4px;top:1px;width:6px;height:5px;background:#e0e8f8"></div></div><span>Total Commander 7.0...</span></div>
<div class="abs tb" style="left:429px"><div class="abs" style="left:10px;top:4px;width:16px;height:16px"><svg width="16" height="16"><path d="M1 13 L11 2 L15 5 L5 15Z" fill="#e8b040" stroke="#a06010"/><path d="M4 10L10 4" stroke="#806020"/></svg></div><span>716. Dj Harmath Feat...</span></div>
<div class="abs tb act" style="left:589px"><div class="abs" style="left:10px;top:4px;width:16px;height:16px;background:#fff;padding:1px"><svg width="14" height="14" viewBox="0 0 16 16" style="display:block"><rect width="16" height="16" fill="#080810"/><radialGradient id="glw14b" cx="0.75" cy="0.35" r="0.45"><stop offset="0" stop-color="#fff0c0"/><stop offset="0.3" stop-color="#f89040"/><stop offset="0.7" stop-color="#a02808"/><stop offset="1" stop-color="#080810" stop-opacity="0"/></radialGradient><rect width="16" height="16" fill="url(#glw14b)"/><path d="M0 7L3 4L13 14L11 16H8Z" fill="#3a80d8"/><path d="M2 6L4 5L12 13L10 14Z" fill="#90d0f8"/></svg></div><span>CATIA V5 - [Product5]</span></div>
<div class="abs tb" style="left:749px"><div class="abs" style="left:12px;top:4px;width:12px;height:16px;background:#d8dce8;border:1px solid #607090"></div><span>Számológép</span></div>
<div class="abs tb" style="left:909px"><div class="abs" style="left:11px;top:3px;width:14px;height:17px"><svg width="14" height="17"><path d="M3 2L6 10M7 1L7 10M11 2L8 10" stroke="#e0a020" stroke-width="2"/><rect x="3" y="9" width="8" height="7" fill="#c04040"/></svg></div><span>z1 - Paint</span></div>
<div class="abs" style="left:1312px;top:9px;color:#fff;font-size:11px;line-height:13px">HU</div>
<div class="abs" id="tray">
<div class="abs" style="left:-8px;top:7px;width:17px;height:17px;border-radius:50%;background:radial-gradient(circle at 40% 35%,#7ab8f8,#2a70d8);border:1px solid #a8d0f8"><svg width="15" height="15" style="position:absolute;left:0;top:0"><path d="M9 3L5 7.5L9 12" stroke="#fff" stroke-width="2.5" fill="none"/></svg></div>
<div class="abs" style="left:11px;top:7px;width:15px;height:15px;background:#fff;border:1px solid #c8e8e0"><div style="position:absolute;left:6px;top:1px;width:7px;height:11px;background:#108868"></div><div style="position:absolute;left:2px;top:3px;width:5px;height:7px;border:2px solid #108868;border-right:0;border-radius:4px 0 0 4px"></div><div style="position:absolute;left:8px;top:3px;width:4px;height:7px;border:2px solid #fff;border-left:0;border-radius:0 4px 4px 0"></div></div>
<div class="abs" style="left:30px;top:7px;width:14px;height:15px;background:#f4e4f4;border:1px solid #d0a0c8"><svg width="12" height="13" style="position:absolute;left:0;top:0"><path d="M5 11L8 2M8 11L11 3" stroke="#c02070" stroke-width="1.4"/><path d="M1 5H5" stroke="#8080a0"/></svg></div>
<div class="abs" style="left:52px;top:9px;color:#fff;font-size:11px;line-height:13px">22:12</div>
</div>
</div>

<svg class="abs" style="left:0;top:0" width="1440" height="900" viewBox="0 0 1440 900">
<g transform="translate(20,819)"><path d="M1.5 0.5H13.5L17.5 4.5V18.5H1.5Z" fill="#fbf8d8" stroke="#000" stroke-width="1.1"/><path d="M13.5 0.5V4.5H17.5" fill="#fff" stroke="#000" stroke-width="0.8"/></g>
<g transform="translate(47,819)"><path d="M1 6H5L6 4H11V7H1Z" fill="#e8c030" stroke="#000" stroke-width="0.8"/><path d="M1 7H12V16H1Z" fill="#d8a818" stroke="#000" stroke-width="0.8"/><path d="M3 10H18L13 16H1Z" fill="#f4d040" stroke="#000" stroke-width="0.8"/><path d="M12 3Q16 1 18 5" stroke="#000" fill="none" stroke-width="1.2"/><path d="M16.5 4L18.5 6L19 3Z" fill="#000"/></g>
<g transform="translate(75,819)"><rect x="1.5" y="1.5" width="17" height="17" rx="1.5" fill="#a8b030" stroke="#000" stroke-width="1.4"/><rect x="5" y="2" width="10" height="7" fill="#f0f4ff"/><path d="M6 4H14M6 6H14" stroke="#6080c0" stroke-width="0.8"/><rect x="5" y="12" width="10" height="6" fill="#000"/><rect x="11" y="13" width="2.5" height="4" fill="#fff"/></g>
<g transform="translate(103,819)"><path d="M5 1H16L13 7H3Z" fill="#f0f4ff" stroke="#000" stroke-width="0.7"/><path d="M6 3H14M5 5H13" stroke="#4060c0" stroke-width="0.8"/><path d="M1 7H18V13H1Z" fill="#c8cc70" stroke="#000" stroke-width="0.8"/><rect x="2" y="13" width="15" height="4" fill="#a8b050" stroke="#000" stroke-width="0.8"/><path d="M4 10H14" stroke="#40a040" stroke-width="1.2"/></g>
<g transform="translate(131,819)"><path d="M5 1L11 12M15 1L9 12" stroke="#b8b8c8" stroke-width="1.6"/><circle cx="7" cy="15.5" r="2.8" fill="none" stroke="#b8b8c8" stroke-width="1.8"/><circle cx="13" cy="15.5" r="2.8" fill="none" stroke="#b8b8c8" stroke-width="1.8"/></g>
<g transform="translate(159,819)"><path d="M1 1H9L11 3V13H1Z" fill="#e8e8f0" stroke="#b0b0c0"/><path d="M7 6H15L17 8V19H7Z" fill="#f0f0f8" stroke="#b0b0c0"/><path d="M9 10H15M9 13H15M9 16H15" stroke="#b8b8c8"/></g>
<g transform="translate(187,819)"><path d="M2 3H14V15H2Z" fill="#d8d8e0" stroke="#b0b0c0"/><rect x="5" y="1" width="6" height="4" fill="#e8e8f0" stroke="#b0b0c0"/><path d="M8 9H18V19H8Z" fill="#f0f0f8" stroke="#b0b0c0"/><path d="M10 12H16M10 15H16" stroke="#b8b8c8"/></g>
<g transform="translate(215.5,819)"><path d="M4 10Q5 3 11 3Q18 3 17 10Q16 15 11 16" stroke="#208080" stroke-width="3.5" fill="none"/><path d="M4 10Q5 3 11 3Q18 3 17 10Q16 15 11 16" stroke="#40d0b0" stroke-width="2" fill="none"/><path d="M0 7L6 14L8 6Z" fill="#30c0a0" stroke="#106060" stroke-width="0.8"/></g>
<g transform="translate(244,819)"><path d="M16 10Q15 3 9 3Q2 3 3 10Q4 15 9 16" stroke="#b8b8c8" stroke-width="3" fill="none"/><path d="M20 7L14 14L12 6Z" fill="#d8d8e0" stroke="#b8b8c8" stroke-width="0.8"/></g>
<g transform="translate(275,819)"><path d="M0.5 2L0.5 15L3.5 12L6.5 18L8.5 17L5.5 11L9.5 11Z" fill="#f8f8b0" stroke="#000" stroke-width="1"/><path d="M10 6Q10 1.5 14.5 1.5Q19 1.5 19 5.5Q19 8 16 9.5V12" stroke="#183070" stroke-width="3" fill="none"/><rect x="14.2" y="14" width="3.6" height="3.4" fill="#183070"/></g>
<g transform="translate(321.5,819)"><text x="0" y="16" font-family="Liberation Serif" font-size="19" fill="#000">f</text><text x="7.5" y="17" font-family="Liberation Sans" font-size="9.5" fill="#000" font-weight="bold">(x)</text></g>
<g transform="translate(349,819)"><ellipse cx="10.5" cy="8.5" rx="9" ry="7" fill="#fff" stroke="#000" stroke-width="1.5"/><path d="M5 14L2.5 19.5L9 15.2" fill="#fff" stroke="#000" stroke-width="1.3"/><path d="M5 5.5H16M4 8H17M5 10.5H15M7 13H13" stroke="#000" stroke-width="0.8" stroke-dasharray="2 1"/></g>
<g transform="translate(374.5,819)"><circle cx="10" cy="6" r="3" fill="none" stroke="#c0c0c8" stroke-width="2"/><circle cx="10" cy="14" r="3" fill="none" stroke="#c0c0c8" stroke-width="2"/></g>
<g transform="translate(400,819)"><rect x="1" y="2" width="17" height="16" fill="#000"/><rect x="1" y="2" width="17" height="3" fill="#2020d0"/><path d="M2.5 7H17M2.5 9.5H17M2.5 12H17M2.5 14.5H17M4 6V17M7 6V17M10 6V17M13 6V17M16 6V17" stroke="#fff" stroke-width="0.9"/></g>
<g transform="translate(430,819)"><rect x="0.5" y="7" width="5" height="6" fill="#f8f080" stroke="#000" stroke-width="0.8"/><path d="M6 10H14M9 10L14 3M9 10L14 17" stroke="#000" stroke-width="1"/><rect x="14" y="1" width="5" height="4" fill="#fff" stroke="#2040e0"/><rect x="14" y="8" width="5" height="4" fill="#fff" stroke="#2040e0"/><rect x="14" y="15" width="5" height="4" fill="#fff" stroke="#2040e0"/><circle cx="11" cy="5" r="1" fill="#e02020"/><circle cx="11" cy="16" r="1" fill="#e02020"/></g>
<g transform="translate(458.5,819)"><path d="M5 9V6Q5 1 10 1Q15 1 15 6V9" stroke="#404040" stroke-width="2.5" fill="none"/><rect x="2" y="9" width="16" height="10" rx="1" fill="#8a8a8a" stroke="#202020"/><rect x="3" y="10" width="6" height="8" fill="#b8b8b8"/><path d="M10 12V16" stroke="#000" stroke-width="1.5"/></g>
<g transform="translate(487,819)"><rect x="0.5" y="1" width="6" height="7" fill="#40a0a0" stroke="#000" stroke-width="0.7"/><rect x="1.5" y="2" width="4" height="2" fill="#c0f0c0"/><rect x="0.5" y="10" width="6" height="7" fill="#40a0a0" stroke="#000" stroke-width="0.7"/><rect x="1.5" y="11" width="4" height="2" fill="#c0f0c0"/><path d="M8 1Q11 1 10 5Q10 8 12 9Q10 10 10 13Q11 17 8 17" stroke="#000" fill="none" stroke-width="1.2"/><path d="M14 8H19M14 11H19" stroke="#000" stroke-width="1"/><path d="M1 19H6" stroke="#000" stroke-dasharray="1 1"/></g>
<g transform="translate(534,819)"><path d="M1 4L4 3L9 9L16 8Q20 9 19 12L12 13L16 19L13 19L7 13L3 13L2 10L6 10Z" fill="#60c8e8" stroke="#105070" stroke-width="1"/></g>
<g transform="translate(562,819)"><rect x="0.5" y="0.5" width="19" height="18" fill="#f8f8a0" stroke="#208080" stroke-width="1"/><path d="M10 2V17M2 9.5H18" stroke="#000" stroke-width="1.3"/><path d="M10 1L7 5H13Z M10 18L7 14H13Z M1 9.5L5 6.5V12.5Z M19 9.5L15 6.5V12.5Z" fill="#000"/></g>
<g transform="translate(590,819)"><path d="M10 1V19M1 10H19" stroke="#102060" stroke-width="2.5"/><path d="M10 0L6 5H14Z M10 20L6 15H14Z M0 10L5 6V14Z M20 10L15 6V14Z" fill="#102060"/><circle cx="10" cy="10" r="2.5" fill="#102060"/></g>
<g transform="translate(618,819)"><path d="M1 8Q4 2 13 3L18 5Q20 8 17 10L7 11L2 12Z" fill="#f8d8c8" stroke="#602020" stroke-width="1"/><ellipse cx="13" cy="13" rx="6" ry="5" fill="#4090d0" stroke="#102060"/><path d="M9 10Q13 8 18 11" stroke="#fff" fill="none"/></g>
<g transform="translate(646,819)"><circle cx="8" cy="8" r="6.5" fill="#f0f8ff" stroke="#102040" stroke-width="2"/><path d="M14 13L19 18" stroke="#102040" stroke-width="3.5"/><path d="M5 8H11M8 5V11" stroke="#000" stroke-width="2"/></g>
<g transform="translate(674,819)"><circle cx="8" cy="8" r="6.5" fill="#f0f8ff" stroke="#102040" stroke-width="2"/><path d="M14 13L19 18" stroke="#102040" stroke-width="3.5"/><path d="M5 8H11" stroke="#000" stroke-width="2"/></g>
<g transform="translate(703,819)"><path d="M0 18L6 12H19L13 18Z" fill="#50c0d0" stroke="#205060" stroke-width="0.8"/><path d="M10 15V3" stroke="#c0a020" stroke-width="1.2" stroke-dasharray="1.5 1"/><path d="M10 1L7 5H13Z" fill="none" stroke="#a04040"/></g>
<g transform="translate(730,819)"><rect x="1" y="1" width="18" height="18" fill="#20a0e0" stroke="#102050"/><rect x="2" y="2" width="7.5" height="7.5" fill="#40e8f8"/><rect x="10.5" y="2" width="7.5" height="7.5" fill="#b080e0"/><rect x="2" y="10.5" width="7.5" height="7.5" fill="#40e8f8"/><rect x="10.5" y="10.5" width="7.5" height="7.5" fill="#40e8f8"/><path d="M20 3V20H3" stroke="#606080" stroke-width="1.5" fill="none"/></g>
<g transform="translate(759,819)"><rect x="6.5" y="-1" width="13.5" height="13.5" fill="#50c8f0" stroke="#1030d0" stroke-width="1.3"/><path d="M0.5 5.5L6.5 -1M13.5 5.5L20 -1M13.5 18.5L20 12.5M0.5 18.5L6.5 12.5" stroke="#000" stroke-width="1.2"/><rect x="0.5" y="5.5" width="13" height="13" fill="#e8e8f8" fill-opacity="0.35" stroke="#000" stroke-width="1.3"/></g>
<g transform="translate(788.5,819)"><rect x="2.5" y="-0.5" width="16" height="19.5" rx="5" fill="#000"/><rect x="3.5" y="0.5" width="14" height="17.5" rx="4" fill="none" stroke="#f0f040" stroke-width="1"/><rect x="5" y="1.5" width="11" height="3" fill="#60a8e0"/><rect x="6" y="6.5" width="3.5" height="10" fill="#80e080"/><rect x="11" y="6.5" width="4.5" height="10" fill="#1010c0"/></g>
<g transform="translate(818.5,819)"><rect x="1.5" y="1.5" width="17" height="17" fill="#60d0f0" stroke="#102050" stroke-width="1.5"/><rect x="2.7" y="2.7" width="14.6" height="14.6" fill="none" stroke="#fff" stroke-width="0.9"/><g transform="translate(1,0)"><path d="M3 8L9 4L15 6L9 10Z" fill="#f8f8d0" stroke="#000" stroke-width="0.7"/><path d="M9 10L15 6V9L9 13Z" fill="#108888" stroke="#000" stroke-width="0.6"/><path d="M3 8L9 10V13L3 11Z" fill="#e8e8b0" stroke="#000" stroke-width="0.6"/></g><g transform="translate(0,1)"><path d="M3 13L9 9L15 11L9 15Z" fill="#f8f8d0" stroke="#000" stroke-width="0.7"/><path d="M9 15L15 11V14L9 18Z" fill="#108888" stroke="#000" stroke-width="0.6"/><path d="M3 13L9 15V18L3 16Z" fill="#e8e8b0" stroke="#000" stroke-width="0.6"/></g></g>
<g transform="translate(846.5,819)"><rect x="1.5" y="1.5" width="17" height="17" fill="#60d0f0" stroke="#102050" stroke-width="1.5"/><rect x="2.7" y="2.7" width="14.6" height="14.6" fill="none" stroke="#fff" stroke-width="0.9"/><g transform="translate(1,0)"><path d="M3 13L9 9L15 11L9 15Z" fill="#f8f8d0" stroke="#000" stroke-width="0.7"/><path d="M9 15L15 11V14L9 18Z" fill="#108888" stroke="#000" stroke-width="0.6"/><path d="M3 13L9 15V18L3 16Z" fill="#e8e8b0" stroke="#000" stroke-width="0.6"/></g></g>
<g transform="translate(900,819)"><circle cx="5" cy="4" r="3.5" fill="#2090c0"/><circle cx="4" cy="3" r="1.5" fill="#a0e0f8"/><path d="M9 3Q16 1 17 8" stroke="#2030a0" stroke-dasharray="1.5 1" fill="none" stroke-width="1.2"/><path d="M15 7L17 10L19 7Z" fill="#2030a0"/><path d="M2 14L6 11H19V15L15 19H2Z" fill="#f8f8f8" stroke="#000" stroke-width="1.2"/><path d="M2 14H15V19M15 14L19 11" stroke="#000" fill="none" stroke-width="1.2"/></g>
<g transform="translate(966,819)"><circle cx="10" cy="10" r="8" fill="none" stroke="#c0c0c8" stroke-width="3"/><path d="M5 12Q7 6 10 10Q13 14 15 8" stroke="#c0c0c8" stroke-width="2.5" fill="none"/></g>
<g transform="translate(1012,819)"><path d="M2 5H18" stroke="#102080" stroke-width="1.5"/><path d="M1 5L5 2V8Z M19 5L15 2V8Z" fill="#102080"/><rect x="1" y="11" width="18" height="6" fill="#f8c8c8" stroke="#402020" stroke-width="0.8"/><path d="M3 11V13M5 11V14M7 11V13M9 11V14M11 11V13M13 11V14M15 11V13M17 11V14" stroke="#402020" stroke-width="0.6"/><rect x="1" y="17" width="18" height="2" fill="#80d0e0"/></g>
<g transform="translate(1041,819)"><path d="M6 1H16V17H19V19H10V15H13V5H6Z" fill="#606060" stroke="#101010"/><circle cx="6" cy="10" r="4.5" fill="#40a0c0" stroke="#103040"/><circle cx="5" cy="9" r="1.8" fill="#a0e0f0"/></g>
<g transform="translate(1068,819)"><circle cx="10" cy="3.5" r="2.5" fill="none" stroke="#202020" stroke-width="1.5"/><rect x="4" y="6" width="12" height="13" rx="2" fill="#c8b040" stroke="#202020"/><rect x="5" y="7" width="3" height="11" fill="#f0e080"/></g>
<g transform="translate(1117,819)"><path d="M3 3L1 5L3 7L5 5Z M3 9L1 11L3 13L5 11Z M3 15L1 17L3 19L5 17Z" fill="#fff" stroke="#000" stroke-width="0.8"/><path d="M7 5H19M7 11H19M7 17H19" stroke="#102060" stroke-width="1.3"/><path d="M7 5L10 3V7Z M19 5L16 3V7Z M7 11L10 9V13Z M19 11L16 9V13Z M7 17L10 15V19Z M19 17L16 15V19Z" fill="#102060"/></g>
<g transform="translate(1165,819)"><path d="M1 9L10 1L19 6L10 14Z" fill="#e0f0ff" stroke="#1840e0" stroke-width="1.3"/><path d="M1 9V13L10 18L19 10V6" fill="none" stroke="#1840e0" stroke-width="1.3"/><path d="M1 11L10 16L19 8" fill="none" stroke="#1840e0" stroke-width="0.8"/></g>
<g transform="translate(1231,819)"><circle cx="6" cy="8" r="5.5" fill="#80c8e0" stroke="#203040" stroke-width="1"/><path d="M4 12L16 8L20 12L8 18Z" fill="#50d0e0" stroke="#103040"/><path d="M12 0L13.5 5L18 5L14.5 8L16 13L12 10L8 13L9.5 8L6 5L10.5 5Z" fill="#f8e020" stroke="#e04020" stroke-width="0.8"/></g>
<g transform="translate(1258,819)"><path d="M6 4L19 0V17L6 19Z" fill="#a880a8" stroke="#302030"/><circle cx="8" cy="9" r="7.5" fill="#5090b0" stroke="#203050" stroke-width="1.2"/><ellipse cx="11" cy="10" rx="4" ry="3" fill="#f8a010" transform="rotate(-30 11 10)"/><circle cx="5" cy="6" r="2" fill="#c0e8f8"/></g>
<g transform="translate(1287,819)"><path d="M1 4L4 1H11V8L8 11H1Z" fill="#e02020" stroke="#000" stroke-width="0.8"/><path d="M1 4H8V11" fill="#20a040" stroke="#000" stroke-width="0.8"/><rect x="1" y="4" width="7" height="7" fill="#20c040" stroke="#000" stroke-width="0.8"/><rect x="14" y="2" width="5" height="5" fill="none" stroke="#000" stroke-width="1"/><path d="M7 19L6 14Q10 9 17 10L19 19Z" fill="#20a040" stroke="#000"/><path d="M8 16Q12 11 17 13L18 17Z" fill="#e02020"/></g>
<rect x="806.5" y="837" width="10" height="7" fill="#fff"/>
<path d="M233.5 839H241.5L237.5 843Z" fill="#000"/>
<path d="M263 839H271L267 843Z" fill="#000"/>
<path d="M418 839H426L422 843Z" fill="#000"/>
<path d="M477 839H485L481 843Z" fill="#000"/>
<path d="M777.5 839H785.5L781.5 843Z" fill="#000"/>
<path d="M807.5 839H815.5L811.5 843Z" fill="#000"/>
<path d="M1135 839H1143L1139 843Z" fill="#000"/>
<rect x="308.5" y="815" width="1.5" height="17" fill="#fff"/><rect x="310.0" y="815" width="1" height="17" fill="#a8a8c0"/>
<rect x="522" y="815" width="1.5" height="17" fill="#fff"/><rect x="523.5" y="815" width="1" height="17" fill="#a8a8c0"/>
<rect x="888" y="815" width="1.5" height="17" fill="#fff"/><rect x="889.5" y="815" width="1" height="17" fill="#a8a8c0"/>
<rect x="953" y="815" width="1.5" height="17" fill="#fff"/><rect x="954.5" y="815" width="1" height="17" fill="#a8a8c0"/>
<rect x="1000" y="815" width="1.5" height="17" fill="#fff"/><rect x="1001.5" y="815" width="1" height="17" fill="#a8a8c0"/>
<rect x="1103" y="815" width="1.5" height="17" fill="#fff"/><rect x="1104.5" y="815" width="1" height="17" fill="#a8a8c0"/>
<rect x="1152.5" y="815" width="1.5" height="17" fill="#fff"/><rect x="1154.0" y="815" width="1" height="17" fill="#a8a8c0"/>
<rect x="1218" y="815" width="1.5" height="17" fill="#fff"/><rect x="1219.5" y="815" width="1" height="17" fill="#a8a8c0"/>
<rect x="6" y="815" width="1.5" height="17" fill="#fff"/><rect x="7.5" y="815" width="1" height="17" fill="#a8a8c0"/>
<g transform="translate(1372,63)"><path d="M1 14Q1 9 7 6L14 11Q12 16 6 17Q2 18 1 14Z" fill="#10a0a0" stroke="#000" stroke-width="1.2"/><path d="M2 16L1 18L5 19" stroke="#000" fill="#fff" stroke-width="1"/><ellipse cx="12" cy="7" rx="6.5" ry="4.8" transform="rotate(-30 12 7)" fill="#000"/><ellipse cx="12" cy="7" rx="4.8" ry="3.2" transform="rotate(-30 12 7)" fill="#fff"/><ellipse cx="12" cy="7.5" rx="3" ry="1.8" transform="rotate(-30 12 7)" fill="#000"/><ellipse cx="11.5" cy="8" rx="2.2" ry="1.2" transform="rotate(-30 12 7)" fill="#fff"/><circle cx="17" cy="2.5" r="2.2" fill="#f8f020" stroke="#000" stroke-width="0.8"/></g>
<g transform="translate(1372,91)"><path d="M1 6L6 1H19V14L14 19H1Z" fill="#f0e8ff" stroke="#1010c0" stroke-width="1.3"/><path d="M1 6H14V19M14 6L19 1" fill="none" stroke="#1010c0" stroke-width="1.3"/><path d="M6 5L9 2H11V15L8 18H6Z" fill="#f8f040" stroke="#c01010" stroke-width="1"/><path d="M3 15H6M15 4L18 4M3 9H5" stroke="#1010c0" stroke-width="1.5"/><circle cx="16" cy="8" r="1" fill="#1010c0"/></g>
<g transform="translate(1372,119)"><circle cx="5.5" cy="6.5" r="4.5" fill="#f8f040" opacity="0.85"/><path d="M4 8L8 4L11 3" stroke="#1020c0" stroke-width="1.3" fill="none"/><path d="M3 6L4 9L7 8" fill="#1020c0"/><path d="M10 7L13 4H19V12L16 15H10Z" fill="#109090" stroke="#000" stroke-width="1.1"/><path d="M10 7H16V15M16 7L19 4" stroke="#000" fill="none" stroke-width="1"/><rect x="10.5" y="7.5" width="5" height="3" fill="#60d0e0"/><path d="M0.5 14L3 12H9V17L7 19H0.5Z" fill="#108090" stroke="#000" stroke-width="1.1"/><rect x="1" y="14" width="5.5" height="2" fill="#60c0e0"/></g>
<g transform="translate(1372,147)"><path d="M1 15L15 0" stroke="#0010d0" stroke-width="1.6"/><path d="M0 15.5H20" stroke="#0010d0" stroke-width="2.2"/><path d="M2.5 9L8 3.5L10.5 6L5 11.5Z" fill="#40a0f0" stroke="#0010a0" stroke-width="0.8"/><path d="M4 9L8 5" stroke="#fff" stroke-width="0.7" stroke-dasharray="1 1"/><rect x="3.5" y="16.5" width="10" height="3.5" fill="#2050d0" stroke="#0010a0" stroke-width="0.6"/><path d="M5 18.3H12.5" stroke="#fff" stroke-width="1.2" stroke-dasharray="1.2 1"/><path d="M14 3H19V14H14V11H17V9H14V6H17V5H14Z" fill="#f8f040" stroke="#000" stroke-width="0.9"/></g>
<g transform="translate(1372,175)"><path d="M10 3V17M2.5 4H17.5M2 10L4 15Q10 19 16 15L18 10" stroke="#000" stroke-width="4" fill="none" stroke-linejoin="miter"/><path d="M10 3V17M2.5 4H17.5M2 10L4 15Q10 19 16 15L18 10" stroke="#f8f8c0" stroke-width="2" fill="none"/><path d="M0 13L3 9L5.5 13Z M20 13L17 9L14.5 13Z" fill="#f8f8c0" stroke="#000" stroke-width="1"/><circle cx="10" cy="2.5" r="2" fill="#f8f8c0" stroke="#000" stroke-width="1"/></g>
<g transform="translate(1372,203)"><path d="M4 17L15 4Q18 1 19 4Q20 6 17 9L8 19Q5 21 4 18Q3 16 6 13L14 5" stroke="#000" stroke-width="3" fill="none"/><path d="M4 17L15 4Q18 1 19 4Q20 6 17 9L8 19Q5 21 4 18Q3 16 6 13L14 5" stroke="#fff" stroke-width="1.5" fill="none"/></g>
<g transform="translate(1372,233)"><rect x="1" y="4" width="13" height="13" fill="#a0e0f0" stroke="#000" stroke-width="1.2"/><path d="M1 1H15M1 4V0" stroke="#000"/><path d="M18 3V19" stroke="#000"/><path d="M7 9L15 17" stroke="#000" stroke-width="2.5"/><circle cx="14" cy="2" r="1.5" fill="#f080f0"/><circle cx="10" cy="8" r="1" fill="#f080f0"/></g>
<g transform="translate(1372,259.5)"><circle cx="2.5" cy="3" r="2" fill="none" stroke="#000"/><path d="M4 3H9" stroke="#000" stroke-width="1.5"/><rect x="9" y="1" width="9" height="5" rx="2" fill="#a0a0a0" stroke="#000"/><path d="M3 8L6 12" stroke="#2040d0" stroke-width="1.3"/><rect x="7" y="12" width="12" height="6" rx="3" fill="#e0c0f0" stroke="#a020c0" stroke-width="1.5"/><circle cx="5" cy="15" r="1.5" fill="#a020c0"/></g>
<g transform="translate(1372,288)"><path d="M2 9Q2 2 10 3L13 3" stroke="#e8e020" stroke-width="3.5" fill="none"/><path d="M12 0L17 3L12 6Z" fill="#e8e020"/><path d="M18 11Q18 18 10 17L7 17" stroke="#40c0d8" stroke-width="3.5" fill="none"/><path d="M8 14L3 17L8 20Z" fill="#40c0d8"/></g>
<g transform="translate(1372,315)"><path d="M2 3H11M2 3V15M2 9H11M2 15H8M11 3V9" stroke="#2040c0" stroke-width="1" fill="none"/><path d="M1 2L3 2L3 4L1 4Z M10 2L12 2L12 4L10 4Z M1 8L3 8L3 10L1 10Z M1 14L3 14L3 16L1 16Z" fill="#2040c0"/><path d="M13 1L19 7M19 1L13 7" stroke="#000" stroke-width="2.4"/><path d="M13 1L19 7M19 1L13 7" stroke="#f8f0a0" stroke-width="1"/><path d="M11.40 14.00 L12.71 14.94 L12.43 15.84 L10.83 15.89 L10.40 16.40 L10.67 17.99 L9.84 18.43 L8.66 17.33 L8.00 17.40 L7.06 18.71 L6.16 18.43 L6.11 16.83 L5.60 16.40 L4.01 16.67 L3.57 15.84 L4.67 14.66 L4.60 14.00 L3.29 13.06 L3.57 12.16 L5.17 12.11 L5.60 11.60 L5.33 10.01 L6.16 9.57 L7.34 10.67 L8.00 10.60 L8.94 9.29 L9.84 9.57 L9.89 11.17 L10.40 11.60 L11.99 11.33 L12.43 12.16 L11.33 13.34Z" fill="#2080e0" stroke="#001060" stroke-width="1"/><path d="M17.80 15.00 L19.10 16.01 L18.80 16.99 L17.16 17.11 L16.69 17.69 L16.89 19.32 L15.99 19.80 L14.74 18.73 L14.00 18.80 L12.99 20.10 L12.01 19.80 L11.89 18.16 L11.31 17.69 L9.68 17.89 L9.20 16.99 L10.27 15.74 L10.20 15.00 L8.90 13.99 L9.20 13.01 L10.84 12.89 L11.31 12.31 L11.11 10.68 L12.01 10.20 L13.26 11.27 L14.00 11.20 L15.01 9.90 L15.99 10.20 L16.11 11.84 L16.69 12.31 L18.32 12.11 L18.80 13.01 L17.73 14.26Z" fill="#f8e880" stroke="#801010" stroke-width="1.1"/><circle cx="14" cy="15" r="1.5" fill="#903010"/></g>
<g transform="translate(1372,367)"><path d="M1 6Q3 1 9 2L16 6Q17 9 14 10L8 7Q4 6 2 8Z" fill="#fff" stroke="#000" stroke-width="1.1"/><path d="M9 7L15 6L17 9L11 11Z" fill="#fff" stroke="#1020c0" stroke-width="1.1"/><path d="M1 13L5 11H12L9 16H1Z" fill="#40a0d0" stroke="#1020a0" stroke-width="1"/><path d="M2 13.5H9" stroke="#fff" stroke-width="1"/><rect x="13" y="10" width="6" height="8" rx="1" fill="#f8f040" stroke="#000" stroke-width="1"/><path d="M16 11V17" stroke="#000" stroke-width="0.8"/></g>
<g transform="translate(1372,395)"><path d="M8 2L11 0L17 3L19 7L13 8L9 5Z" fill="none" stroke="#2040c0" stroke-width="1" stroke-dasharray="1.5 1"/><ellipse cx="5" cy="5" rx="3" ry="2.2" fill="#d8d840" stroke="#000" stroke-width="0.9"/><path d="M5 7V13" stroke="#000" stroke-width="1.6"/><ellipse cx="5" cy="15" rx="4.5" ry="2.5" fill="#fff" stroke="#000" stroke-width="1.2"/><circle cx="14" cy="14" r="5.5" fill="#402030" stroke="#000"/><circle cx="15" cy="14" r="2.5" fill="#e0a0e0"/></g>
<g transform="translate(1372,425)"><path d="M1.5 1.5L6 6M18.5 1.5L14 6M1.5 18.5L6 14M18.5 18.5L14 14" stroke="#000" stroke-width="1.3"/><path d="M0.5 0.5H4.5L0.5 4.5Z M19.5 0.5H15.5L19.5 4.5Z M0.5 19.5H4.5L0.5 15.5Z M19.5 19.5H15.5L19.5 15.5Z" fill="#000"/><rect x="5" y="5" width="10" height="10" fill="#f8f8c0"/><rect x="6" y="6" width="3.5" height="3.5" fill="#40c0d0" stroke="#000" stroke-width="0.8"/><rect x="10.5" y="6" width="3.5" height="3" fill="#f8e8a0" stroke="#000" stroke-width="0.8"/><rect x="6" y="10.5" width="3.5" height="3.5" fill="#f8e8a0" stroke="#000" stroke-width="0.8"/><rect x="10.5" y="10" width="3.5" height="4" fill="#40c0d0" stroke="#000" stroke-width="0.8"/></g>
<g transform="translate(1372,453)"><path d="M0.5 2Q6 1 11 7L12 10L8 11Q2 9 0.5 2Z" fill="#f08020"/><path d="M2 3Q6 4 10 8" stroke="#f8c080" stroke-width="1"/><path d="M15 2L15.5 7L19.5 8L15.5 9.5L16 14L13 10.5L9 11.5L12 8.5L10.5 4.5L13.5 6.5Z" fill="#f8a040"/><path d="M9 11L14 10V18L9 19Z" fill="#f8a848" stroke="#f07820" stroke-width="0.8"/><path d="M11.5 12V18" stroke="#f8d0a0" stroke-width="0.8"/></g>
<g transform="translate(1372,554)"><path d="M5 2H15L19 8H9Z" fill="#fff" stroke="#000"/><path d="M1 8L5 4H14V15L10 19H1Z" fill="#40b0b0" stroke="#000"/><rect x="1" y="8" width="9" height="11" fill="#f0f060" stroke="#000"/><rect x="13" y="3" width="6" height="5" fill="#f0f0c0" stroke="#000" stroke-width="0.8"/><path d="M6 11V16" stroke="#000" stroke-width="1.2"/></g>
<g transform="translate(1372,583)"><path d="M3 4Q1 8 3 12" stroke="#000" stroke-dasharray="1.5 1" fill="none"/><path d="M5 2L7 0L13 0L11 2Z" fill="none" stroke="#000" stroke-dasharray="1 1"/><path d="M7 4L14 1V16L7 19Z" fill="#f8f8b0" stroke="#60b0a0"/><path d="M12 7L15 5H18V17L15 19H12Z" fill="#2040c0" stroke="#000" stroke-width="0.8"/><rect x="12" y="7" width="3" height="12" fill="#60c0e0" stroke="#000" stroke-width="0.6"/></g>
<g transform="translate(1372,612)"><rect x="3" y="1" width="14" height="3" fill="#40d0c0" stroke="#000" stroke-width="0.8"/><path d="M2 1V19H6M4 4V16M4 8H9M4 12H9M4 16H9" stroke="#000" stroke-width="1.2" fill="none"/><rect x="9" y="6" width="8" height="3" fill="#40d0c0" stroke="#000" stroke-width="0.6"/><rect x="9" y="11" width="8" height="3" fill="#40d0c0" stroke="#000" stroke-width="0.6"/><rect x="9" y="16" width="8" height="3" fill="#c02020" stroke="#000" stroke-width="0.6"/></g>
<g transform="translate(1411,63)"><path d="M11.30 11.00 L12.88 12.17 L12.54 13.30 L10.58 13.39 L10.04 14.04 L10.33 15.99 L9.30 16.54 L7.84 15.22 L7.00 15.30 L5.83 16.88 L4.70 16.54 L4.61 14.58 L3.96 14.04 L2.01 14.33 L1.46 13.30 L2.78 11.84 L2.70 11.00 L1.12 9.83 L1.46 8.70 L3.42 8.61 L3.96 7.96 L3.67 6.01 L4.70 5.46 L6.16 6.78 L7.00 6.70 L8.17 5.12 L9.30 5.46 L9.39 7.42 L10.04 7.96 L11.99 7.67 L12.54 8.70 L11.22 10.16Z" fill="#383838" stroke="#101010" stroke-width="0.8"/><circle cx="7" cy="11" r="2" fill="#c8c8d0"/><path d="M18.10 7.00 L19.40 7.98 L19.12 8.91 L17.49 9.00 L17.05 9.55 L17.28 11.16 L16.41 11.62 L15.20 10.53 L14.50 10.60 L13.52 11.90 L12.59 11.62 L12.50 9.99 L11.95 9.55 L10.34 9.78 L9.88 8.91 L10.97 7.70 L10.90 7.00 L9.60 6.02 L9.88 5.09 L11.51 5.00 L11.95 4.45 L11.72 2.84 L12.59 2.38 L13.80 3.47 L14.50 3.40 L15.48 2.10 L16.41 2.38 L16.50 4.01 L17.05 4.45 L18.66 4.22 L19.12 5.09 L18.03 6.30Z" fill="#484848" stroke="#101010" stroke-width="0.8"/><circle cx="14.5" cy="7" r="1.6" fill="#c8c8d0"/><path d="M2 18Q9 20 17 14" stroke="#80c0b0" stroke-width="2" fill="none" opacity="0.5"/></g>
<g transform="translate(1411,114)"><path d="M4 1L4 17L8 13L12 20L15 18L11 11L17 11Z" fill="#fff4e0" stroke="#f07818" stroke-width="2"/></g>
<g transform="translate(1411,158)"><path d="M11.80 11.00 L13.40 12.13 L13.11 13.22 L11.16 13.40 L10.68 14.09 L11.18 15.98 L10.25 16.63 L8.64 15.51 L7.83 15.73 L7.00 17.50 L5.87 17.40 L5.36 15.51 L4.60 15.16 L2.82 15.98 L2.02 15.18 L2.84 13.40 L2.49 12.64 L0.60 12.13 L0.50 11.00 L2.27 10.17 L2.49 9.36 L1.37 7.75 L2.02 6.82 L3.91 7.32 L4.60 6.84 L4.78 4.89 L5.87 4.60 L7.00 6.20 L7.83 6.27 L9.22 4.89 L10.25 5.37 L10.09 7.32 L10.68 7.91 L12.63 7.75 L13.11 8.78 L11.73 10.17Z" fill="#fff" stroke="#202020" stroke-width="1.2"/><circle cx="7" cy="11" r="1.8" fill="#303030"/><path d="M10 0L10 14L13 11L16 17L18 16L15 10L20 10Z" fill="#f8f080" stroke="#000" stroke-width="1"/></g>
<g transform="translate(1411,205)"><path d="M7.80 4.50 L8.90 5.39 L8.60 6.24 L7.19 6.25 L6.75 6.69 L6.74 8.10 L5.89 8.40 L5.00 7.30 L4.38 7.23 L3.26 8.10 L2.51 7.63 L2.81 6.25 L2.48 5.71 L1.10 5.39 L1.00 4.50 L2.27 3.88 L2.48 3.29 L1.87 2.01 L2.51 1.37 L3.79 1.98 L4.38 1.77 L5.00 0.50 L5.89 0.60 L6.21 1.98 L6.75 2.31 L8.13 2.01 L8.60 2.76 L7.73 3.88Z" fill="#f8f020" stroke="#000" stroke-width="0.8"/><circle cx="5" cy="4.5" r="1.1" fill="#000"/><path d="M1 10Q3 16 9 17M10 3Q12 3 13 6" stroke="#2060f0" stroke-width="1.6" stroke-dasharray="1.5 1" fill="none"/><path d="M18.20 13.00 L19.91 14.10 L19.66 15.16 L17.63 15.36 L17.21 16.06 L17.95 17.95 L17.11 18.66 L15.36 17.63 L14.61 17.95 L14.10 19.91 L13.00 20.00 L12.19 18.14 L11.39 17.95 L9.82 19.24 L8.89 18.66 L9.32 16.68 L8.79 16.06 L6.76 16.18 L6.34 15.16 L7.86 13.81 L7.80 13.00 L6.09 11.90 L6.34 10.84 L8.37 10.64 L8.79 9.94 L8.05 8.05 L8.89 7.34 L10.64 8.37 L11.39 8.05 L11.90 6.09 L13.00 6.00 L13.81 7.86 L14.61 8.05 L16.18 6.76 L17.11 7.34 L16.68 9.32 L17.21 9.94 L19.24 9.82 L19.66 10.84 L18.14 12.19Z" fill="#f8e880" stroke="#801010" stroke-width="1.3"/><circle cx="13" cy="13" r="2" fill="#c03010" stroke="#401000" stroke-width="0.6"/></g>
<g transform="translate(1411,233)"><path d="M4 1H15L19 5V19H4Z" fill="#f0fff8" stroke="#00a0a0" stroke-width="1.3"/><path d="M6.60 4.00 L7.70 4.85 L7.42 5.65 L6.03 5.62 L5.62 6.03 L5.65 7.42 L4.85 7.70 L4.00 6.60 L3.42 6.53 L2.35 7.42 L1.63 6.97 L1.97 5.62 L1.66 5.13 L0.30 4.85 L0.20 4.00 L1.47 3.42 L1.66 2.87 L1.03 1.63 L1.63 1.03 L2.87 1.66 L3.42 1.47 L4.00 0.20 L4.85 0.30 L5.13 1.66 L5.62 1.97 L6.97 1.63 L7.42 2.35 L6.53 3.42Z" fill="#f8f020" stroke="#000" stroke-width="0.7"/><path d="M6 8L10 10" stroke="#2040d0" stroke-width="1.5"/><path d="M15.40 13.00 L16.91 14.04 L16.64 15.05 L14.81 15.20 L14.37 15.83 L14.86 17.60 L14.00 18.20 L12.50 17.13 L11.76 17.33 L11.00 19.00 L9.96 18.91 L9.50 17.13 L8.80 16.81 L7.14 17.60 L6.40 16.86 L7.19 15.20 L6.87 14.50 L5.09 14.04 L5.00 13.00 L6.67 12.24 L6.87 11.50 L5.80 10.00 L6.40 9.14 L8.17 9.63 L8.80 9.19 L8.95 7.36 L9.96 7.09 L11.00 8.60 L11.76 8.67 L13.05 7.36 L14.00 7.80 L13.83 9.63 L14.37 10.17 L16.20 10.00 L16.64 10.95 L15.33 12.24Z" fill="#f8e880" stroke="#801010" stroke-width="1.2"/><circle cx="11" cy="13" r="1.8" fill="#c03010"/></g>
<g transform="translate(1411,261)"><path d="M5 1H15L19 5V19H5Z" fill="#f0fff8" stroke="#00a0a0" stroke-width="1.3"/><path d="M5.90 3.50 L6.91 4.28 L6.65 5.02 L5.38 5.00 L5.00 5.38 L5.02 6.65 L4.28 6.91 L3.50 5.90 L2.97 5.84 L1.98 6.65 L1.32 6.24 L1.62 5.00 L1.34 4.54 L0.09 4.28 L0.00 3.50 L1.16 2.97 L1.34 2.46 L0.76 1.32 L1.32 0.76 L2.46 1.34 L2.97 1.16 L3.50 0.00 L4.28 0.09 L4.54 1.34 L5.00 1.62 L6.24 1.32 L6.65 1.98 L5.84 2.97Z" fill="#f8f020" stroke="#000" stroke-width="0.7"/><circle cx="14" cy="12" r="3.5" fill="#505060"/><path d="M13.80 12.00 L15.40 13.13 L15.11 14.22 L13.16 14.40 L12.68 15.09 L13.18 16.98 L12.25 17.63 L10.64 16.51 L9.83 16.73 L9.00 18.50 L7.87 18.40 L7.36 16.51 L6.60 16.16 L4.82 16.98 L4.02 16.18 L4.84 14.40 L4.49 13.64 L2.60 13.13 L2.50 12.00 L4.27 11.17 L4.49 10.36 L3.37 8.75 L4.02 7.82 L5.91 8.32 L6.60 7.84 L6.78 5.89 L7.87 5.60 L9.00 7.20 L9.83 7.27 L11.22 5.89 L12.25 6.37 L12.09 8.32 L12.68 8.91 L14.63 8.75 L15.11 9.78 L13.73 11.17Z" fill="#f8e880" stroke="#402010" stroke-width="1.2"/><circle cx="9" cy="12" r="2" fill="#903010"/></g>
<g transform="translate(1411,289)"><path d="M2 1H14L18 5V19H2Z" fill="#f0fff8" stroke="#00a0a0" stroke-width="1.3"/><path d="M5 11H12" stroke="#2040d0" stroke-width="2"/><path d="M11 6L19 11L11 16Z" fill="#f0f020" stroke="#000" stroke-width="0.8"/></g>
<g transform="translate(1411,317)"><path d="M2 1H14L18 5V19H2Z" fill="#f0fff8" stroke="#00a0a0" stroke-width="1.3"/><path d="M5 17L8 12L13 12L10 8" stroke="#a020c0" stroke-width="1.5" fill="none"/><path d="M11 4L19 8L11 12Z" fill="#f0f020" stroke="#000" stroke-width="0.8"/></g>
<g transform="translate(1411,345)"><rect x="1" y="0.5" width="6" height="6" fill="#201860"/><rect x="3" y="2.5" width="4" height="4" fill="#f8f040"/><path d="M8 5L14 10" stroke="#000" stroke-width="2.6"/><path d="M8 5L14 10" stroke="#f8d020" stroke-width="1.4"/><path d="M12 11L16 12L15 8Z" fill="#f8d020" stroke="#000" stroke-width="0.6"/><ellipse cx="15" cy="15" rx="5" ry="2.2" fill="#40d8e8"/><path d="M9 12L20 18M20 12L9 18" stroke="#1030e0" stroke-width="2.2"/><path d="M1 15L3 13V17Z" fill="#000"/><path d="M4.5 15H5.5M6.5 15H7.5" stroke="#000" stroke-width="1.5"/></g>
<g transform="translate(1411,373)"><rect x="1" y="1" width="11" height="3" fill="#fff" stroke="#000" stroke-width="1"/><path d="M2 4V18" stroke="#000" stroke-width="1.2"/><rect x="4" y="6.5" width="7" height="2.5" fill="#40c0b0" stroke="#000" stroke-width="0.6"/><rect x="4" y="10.5" width="7" height="2.5" fill="#40c0b0" stroke="#000" stroke-width="0.6"/><rect x="4" y="14.5" width="7" height="2.5" fill="#40c0b0" stroke="#000" stroke-width="0.6"/><path d="M14 6Q20 8 19 13Q18 17 13 17" stroke="#d01010" stroke-width="2.6" fill="none"/><path d="M13 4L13 9L16 6.5Z" fill="#d01010"/></g>
<g transform="translate(1411,401)"><rect x="7" y="0.5" width="12" height="11" fill="#fff" stroke="#000" stroke-width="1"/><path d="M9 2.5V9.5M8 3.5L9 2.5M8 9.5H10.5" stroke="#000" stroke-width="1.4" fill="none"/><path d="M17 2.5H13V5.5Q17 5 17 7.5Q17 10 12.5 9.5" stroke="#000" stroke-width="1.5" fill="none"/><rect x="0.5" y="7.5" width="12" height="12" fill="#fff" stroke="#000" stroke-width="1.2"/><path d="M2.5 18L6.5 9L10.5 18M4 15H9" stroke="#000" stroke-width="1.6" fill="none"/><path d="M1 2H6M13 18H19" stroke="#000" stroke-width="1"/><path d="M0 2L2 0.5V3.5Z M20 18L18 16.5V19.5Z" fill="#000"/></g>
<g transform="translate(1411,428.5)"><rect x="1" y="0.5" width="10" height="4" fill="#40c0c0" stroke="#000" stroke-width="0.9"/><path d="M2.5 4.5V9H7" stroke="#000" stroke-width="1.1" fill="none"/><rect x="6.5" y="4.5" width="12" height="11" fill="#f8f020" stroke="#d03010" stroke-width="1.4"/><rect x="8" y="6" width="6" height="2" fill="#40c0c0" stroke="#000" stroke-width="0.6"/><path d="M9 8V13H12" stroke="#000" stroke-width="0.9" fill="none"/><rect x="12" y="11.5" width="5" height="2" fill="#40c0c0" stroke="#000" stroke-width="0.6"/><rect x="10" y="16" width="7" height="3" fill="#40c0c0" stroke="#000" stroke-width="0.8"/></g>
<g transform="translate(1411,457)"><rect x="1" y="0.5" width="11" height="3.5" fill="#fff" stroke="#000" stroke-width="1"/><path d="M2 4V12H6M4 12V18H8" stroke="#000" stroke-width="1.1" fill="none"/><path d="M12 5L19.5 3V19.5L12 17Z" fill="#e8e8ff" stroke="#1010d0" stroke-width="1.2"/><path d="M13 8H19M13 10.5H19M13 13H19M13 15.5H19" stroke="#1010d0" stroke-width="0.9"/><path d="M6 12L10 10M6 12L10 15M6 12H13" stroke="#000" stroke-width="2.4"/><path d="M6 12L10 10M6 12L10 15M6 12H13" stroke="#f8f040" stroke-width="1"/></g>
<g transform="translate(1411,486)"><path d="M6 1L12 7M12 1L6 7" stroke="#000" stroke-width="2.6"/><path d="M6 1L12 7M12 1L6 7" stroke="#f8f0a0" stroke-width="1.2"/><path d="M14.5 4V8.5M14.5 5.5Q15.5 4 17 4.5Q18 5 18 6.5V8.5" stroke="#000" stroke-width="1.1" fill="none"/><path d="M9.00 12.00 L10.39 13.07 L10.08 14.10 L8.33 14.22 L7.83 14.83 L8.06 16.57 L7.10 17.08 L5.78 15.92 L5.00 16.00 L3.93 17.39 L2.90 17.08 L2.78 15.33 L2.17 14.83 L0.43 15.06 L-0.08 14.10 L1.08 12.78 L1.00 12.00 L-0.39 10.93 L-0.08 9.90 L1.67 9.78 L2.17 9.17 L1.94 7.43 L2.90 6.92 L4.22 8.08 L5.00 8.00 L6.07 6.61 L7.10 6.92 L7.22 8.67 L7.83 9.17 L9.57 8.94 L10.08 9.90 L8.92 11.22Z" fill="#2080e0" stroke="#001060" stroke-width="1"/><path d="M15.40 14.00 L16.91 15.04 L16.64 16.05 L14.81 16.20 L14.37 16.83 L14.86 18.60 L14.00 19.20 L12.50 18.13 L11.76 18.33 L11.00 20.00 L9.96 19.91 L9.50 18.13 L8.80 17.81 L7.14 18.60 L6.40 17.86 L7.19 16.20 L6.87 15.50 L5.09 15.04 L5.00 14.00 L6.67 13.24 L6.87 12.50 L5.80 11.00 L6.40 10.14 L8.17 10.63 L8.80 10.19 L8.95 8.36 L9.96 8.09 L11.00 9.60 L11.76 9.67 L13.05 8.36 L14.00 8.80 L13.83 10.63 L14.37 11.17 L16.20 11.00 L16.64 11.95 L15.33 13.24Z" fill="#f8e880" stroke="#801010" stroke-width="1.2"/><circle cx="11" cy="14" r="1.7" fill="#903010"/></g>
<g transform="translate(1411,548)"><path d="M3 2V11H9" stroke="#000" stroke-width="1" fill="none"/><path d="M1.5 3.5L3 1L4.5 3.5Z" fill="#000"/><rect x="1" y="11" width="8" height="8" fill="#900010" stroke="#000"/><path d="M9 4L12 1H19V8L16 11H9Z" fill="#f8f040" stroke="#000" stroke-width="0.9"/><rect x="9" y="4" width="7" height="7" fill="#20a0b0" stroke="#000" stroke-width="0.9"/><path d="M9 4L12 1H19L16 4Z" fill="#80e0e0" stroke="#000" stroke-width="0.8"/><path d="M10 13V17H16" stroke="#000" stroke-width="1.2" fill="none"/><path d="M16 14.5L19.5 17L16 19.5Z" fill="#000"/></g>
<g transform="translate(1411,576)"><path d="M3 2V11H9" stroke="#000" stroke-width="1" fill="none"/><path d="M1.5 3.5L3 1L4.5 3.5Z" fill="#000"/><rect x="1" y="11" width="8" height="8" fill="#900010" stroke="#000"/><path d="M6 7L9 4H15V10L12 13H6Z" fill="#f8f040" stroke="#000" stroke-width="0.9"/><rect x="6" y="7" width="6" height="6" fill="#20a0b0" stroke="#000" stroke-width="0.9"/><path d="M13 1H20L16.5 5Z" fill="#f8f040" stroke="#000" stroke-width="0.8"/><path d="M13 19H20L16.5 15Z" fill="#f8f040" stroke="#000" stroke-width="0.8"/><rect x="14" y="7" width="5" height="6" fill="#f8f040" stroke="#000" stroke-width="0.8"/></g>
<g transform="translate(1411,604)"><rect x="1" y="1" width="10" height="3" fill="#fff" stroke="#000"/><path d="M2 4V18" stroke="#000"/><rect x="4" y="6" width="6" height="2.5" fill="#40c0b0" stroke="#000" stroke-width="0.6"/><rect x="4" y="10" width="6" height="2.5" fill="#40c0b0" stroke="#000" stroke-width="0.6"/><rect x="4" y="14" width="6" height="2.5" fill="#40c0b0" stroke="#000" stroke-width="0.6"/><path d="M12 7Q20 9 18 15Q16 18 12 17" stroke="#000" stroke-width="2.5" fill="none"/><path d="M12 7Q20 9 18 15Q16 18 12 17" stroke="#f0f040" stroke-width="1.2" fill="none"/></g>
<g transform="translate(1411,651)"><path d="M8 1.5L12 10L16 1.5" stroke="#000" stroke-width="1.3" fill="none"/><path d="M9 12H12M14 12H17" stroke="#000" stroke-width="1.2"/><path d="M21 8L16 12L21 16" stroke="#000" stroke-width="1.1" fill="none"/><path d="M9 12L5 15" stroke="#000" stroke-width="1.3"/><path d="M2 18L3 13L7 16Z" fill="#000"/></g>
<g transform="translate(1411,678)"><path d="M7 10L9 2.5L11 10M7.8 7.5H10.2" stroke="#101060" stroke-width="1.1" fill="none"/><path d="M12.2 10V2.5H14.2Q15.8 2.5 15.8 4.4Q15.8 6 14 6.1H12.2M14 6.1Q16.2 6.2 16.2 8Q16.2 10 14.2 10H12.2" stroke="#101060" stroke-width="1.1" fill="none"/><path d="M21 3.5Q20 2.5 19 2.5Q17.2 2.5 17.2 6.2Q17.2 10 19 10Q20 10 21 9" stroke="#101060" stroke-width="1.1" fill="none"/><path d="M7 12.5H21" stroke="#000" stroke-width="1.3"/><path d="M7 12.5L5 15" stroke="#000" stroke-width="1.3"/><path d="M2 18L3 13L7 16Z" fill="#000"/></g>
<g transform="translate(1411,708)"><path d="M9 5H18L21.5 9.5L18 14H9Z" fill="#fff" stroke="#000" stroke-width="1.3"/><path d="M9 11L5 15" stroke="#000" stroke-width="1.3"/><path d="M2 18L3 13L7 16Z" fill="#000"/></g>
<g transform="translate(1411,739)"><path d="M8 3L17 0V13L8 17Z" fill="#c8a8b8" stroke="#a07080" stroke-width="0.8"/><path d="M2 7L11 3V16L2 20Z" fill="#a0a0c8" stroke="#8080a8" stroke-width="0.8" opacity="0.9"/><path d="M6 5V14Q6 17 9 17H13V11" stroke="#1040d0" stroke-width="3.4" fill="none"/><path d="M6 5V14Q6 17 9 17H13V11" stroke="#40a0f8" stroke-width="1.4" fill="none"/><path d="M3.5 7L6 3L8.5 7Z" fill="#1040d0"/></g>
<g transform="translate(1411,769)"><rect x="9" y="0.5" width="6" height="6" fill="#fff" stroke="#000" stroke-width="1"/><path d="M12 6.5L8 11.5H16Z" fill="#d01010" stroke="#000" stroke-width="0.6"/><path d="M1.5 15L6 11H20L15.5 15Z" fill="#f8e070" stroke="#000" stroke-width="0.8"/><path d="M1.5 15H15.5V19.5H1.5Z" fill="#40c8d0" stroke="#000" stroke-width="0.8"/><path d="M15.5 15L20 11V15.5L15.5 19.5Z" fill="#20a0b0" stroke="#000" stroke-width="0.8"/><path d="M3 17H14" stroke="#fff" stroke-width="0.6" stroke-dasharray="1 1"/></g>
<rect x="1367" y="51" width="16" height="1.5" fill="#fff"/><rect x="1367" y="52.5" width="16" height="1" fill="#a8a8c0"/>
<rect x="1367" y="354" width="16" height="1.5" fill="#fff"/><rect x="1367" y="355.5" width="16" height="1" fill="#a8a8c0"/>
<rect x="1367" y="541" width="16" height="1.5" fill="#fff"/><rect x="1367" y="542.5" width="16" height="1" fill="#a8a8c0"/>
<rect x="1407" y="51" width="16" height="1.5" fill="#fff"/><rect x="1407" y="52.5" width="16" height="1" fill="#a8a8c0"/>
<rect x="1407" y="99" width="16" height="1.5" fill="#fff"/><rect x="1407" y="100.5" width="16" height="1" fill="#a8a8c0"/>
<rect x="1407" y="146" width="16" height="1.5" fill="#fff"/><rect x="1407" y="147.5" width="16" height="1" fill="#a8a8c0"/>
<rect x="1407" y="193" width="16" height="1.5" fill="#fff"/><rect x="1407" y="194.5" width="16" height="1" fill="#a8a8c0"/>
<rect x="1407" y="535" width="16" height="1.5" fill="#fff"/><rect x="1407" y="536.5" width="16" height="1" fill="#a8a8c0"/>
<rect x="1407" y="638" width="16" height="1.5" fill="#fff"/><rect x="1407" y="639.5" width="16" height="1" fill="#a8a8c0"/>
<path d="M1431 132.5H1439L1435 136.5Z" fill="#000"/>
<path d="M1430 180H1438L1434 184Z" fill="#000"/>
<path d="M1391 416H1399L1395 420Z" fill="#000"/>
<path d="M1431 508H1439L1435 512Z" fill="#000"/>
<path d="M1391 575H1399L1395 579Z" fill="#000"/>
<path d="M1430 699H1438L1434 703Z" fill="#000"/>
<path d="M1430 730H1438L1434 734Z" fill="#000"/>
<path d="M1430 760H1438L1434 764Z" fill="#000"/>
<g><path d="M1401 810.5Q1410 808 1411 812Q1409 816 1404 819" stroke="#d82030" stroke-width="1.8" fill="none"/><path d="M1396 832L1400 822Q1407 820 1406 825Q1404 831 1394 832" stroke="#202080" stroke-width="2" fill="none"/><path d="M1415 818H1408L1412 824L1406 830" stroke="#e8a820" stroke-width="2" fill="none"/><text x="1400" y="839.5" font-family="Liberation Sans" font-weight="bold" font-style="italic" font-size="9" fill="#282880" textLength="32">CATIA</text></g>
</svg>
</body></html>
